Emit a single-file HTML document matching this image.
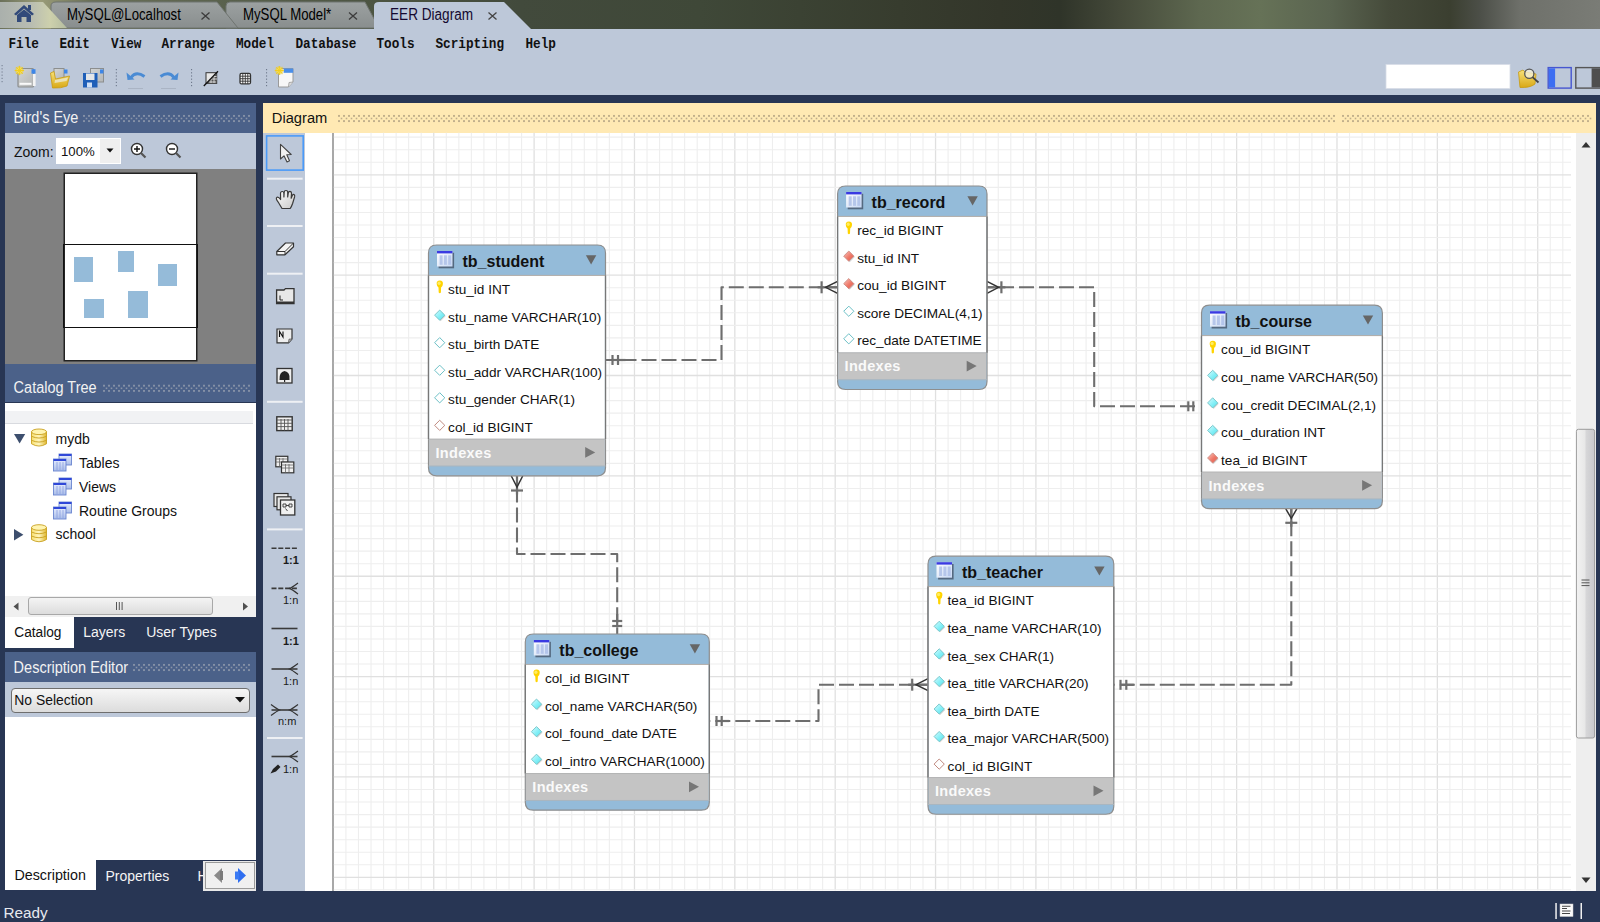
<!DOCTYPE html><html><head><meta charset="utf-8"><style>
html,body{margin:0;padding:0;}
body{width:1600px;height:922px;overflow:hidden;position:relative;background:#283654;font-family:'Liberation Sans', sans-serif;}
</style></head><body>
<div style="position:absolute;left:0;top:0;width:1600px;height:29px;background:linear-gradient(90deg,#6a705a 0px,#9a9c78 40px,#6a7058 90px,#58604c 240px,#4a5240 400px,#424a3c 520px,#3f4838 700px,#373c2e 900px,#33362a 1000px,#2f3429 1060px,#454a3a 1120px,#5e6850 1200px,#667257 1260px,#5a6450 1330px,#454a3a 1390px,#3b3f30 1450px,#4c4f48 1480px,#6e706a 1520px,#7a7c76 1600px);"></div>
<svg style="position:absolute;left:0;top:0" width="1600" height="30">
<defs>
<linearGradient id="tabg" x1="0" y1="0" x2="0" y2="1"><stop offset="0" stop-color="#9ca1a1"/><stop offset="1" stop-color="#898e8e"/></linearGradient>
<linearGradient id="homeg" x1="0" y1="0" x2="1" y2="0"><stop offset="0" stop-color="#aab0ac"/><stop offset="0.45" stop-color="#b8bcb2"/><stop offset="0.75" stop-color="#cdd0ac"/><stop offset="1" stop-color="#b4bca0"/></linearGradient>
</defs>
<path d="M226,28 L226,6 Q226,2 230,2 L365,2 L379,28 Z" fill="url(#tabg)" stroke="#6f7470" stroke-width="1"/>
<path d="M51,28 L51,6 Q51,2 56,2 L217,2 L238,28 Z" fill="url(#tabg)" stroke="#6f7470" stroke-width="1"/>
<path d="M0,28 L0,2 L43,2 L67,28 Z" fill="url(#homeg)"/>
<path d="M374,29 L374,6 Q374,2 379,2 L504,2 L531,29 Z" fill="#bdc8d9"/>
<g fill="#324a7a">
<path d="M14,14 L24,5 L34,14 L32,15.5 L24,8.5 L16,15.5 Z"/>
<path d="M17,15 L24,9.5 L31,15 L31,22 L26.5,22 L26.5,17 L21.5,17 L21.5,22 L17,22 Z"/>
<rect x="28" y="5" width="3" height="5"/>
</g>
<g stroke="#3c3c3c" stroke-width="1.3">
<path d="M201.5,12.5 L209.5,19.5 M209.5,12.5 L201.5,19.5"/>
<path d="M349,12.5 L357,19.5 M357,12.5 L349,19.5"/>
<path d="M488.5,12.5 L496.5,19.5 M496.5,12.5 L488.5,19.5" stroke="#444"/>
</g>
</svg>
<div style="position:absolute;left:67px;top:8.73px;white-space:pre;font:normal 13.2px/13.2px 'Liberation Sans', sans-serif;transform:scaleY(1.2);transform-origin:0 11.17px;color:#000;">MySQL@Localhost</div>
<div style="position:absolute;left:243px;top:8.73px;white-space:pre;font:normal 13.2px/13.2px 'Liberation Sans', sans-serif;transform:scaleY(1.2);transform-origin:0 11.17px;color:#000;">MySQL Model*</div>
<div style="position:absolute;left:390px;top:8.99px;white-space:pre;font:normal 13.6px/13.6px 'Liberation Sans', sans-serif;transform:scaleY(1.16);transform-origin:0 11.51px;color:#140830;">EER Diagram</div>
<div style="position:absolute;left:0px;top:29px;width:1600px;height:66px;background:#bdc8d9;"></div>
<div style="position:absolute;left:8.5px;top:37.599999999999994px;white-space:pre;font:bold 12.7px/14px 'Liberation Mono', monospace;color:#111;transform:scaleY(1.2);transform-origin:0 10.3px;">File</div>
<div style="position:absolute;left:59.5px;top:37.599999999999994px;white-space:pre;font:bold 12.7px/14px 'Liberation Mono', monospace;color:#111;transform:scaleY(1.2);transform-origin:0 10.3px;">Edit</div>
<div style="position:absolute;left:111px;top:37.599999999999994px;white-space:pre;font:bold 12.7px/14px 'Liberation Mono', monospace;color:#111;transform:scaleY(1.2);transform-origin:0 10.3px;">View</div>
<div style="position:absolute;left:161.5px;top:37.599999999999994px;white-space:pre;font:bold 12.7px/14px 'Liberation Mono', monospace;color:#111;transform:scaleY(1.2);transform-origin:0 10.3px;">Arrange</div>
<div style="position:absolute;left:236px;top:37.599999999999994px;white-space:pre;font:bold 12.7px/14px 'Liberation Mono', monospace;color:#111;transform:scaleY(1.2);transform-origin:0 10.3px;">Model</div>
<div style="position:absolute;left:295.5px;top:37.599999999999994px;white-space:pre;font:bold 12.7px/14px 'Liberation Mono', monospace;color:#111;transform:scaleY(1.2);transform-origin:0 10.3px;">Database</div>
<div style="position:absolute;left:376.5px;top:37.599999999999994px;white-space:pre;font:bold 12.7px/14px 'Liberation Mono', monospace;color:#111;transform:scaleY(1.2);transform-origin:0 10.3px;">Tools</div>
<div style="position:absolute;left:435.5px;top:37.599999999999994px;white-space:pre;font:bold 12.7px/14px 'Liberation Mono', monospace;color:#111;transform:scaleY(1.2);transform-origin:0 10.3px;">Scripting</div>
<div style="position:absolute;left:525.5px;top:37.599999999999994px;white-space:pre;font:bold 12.7px/14px 'Liberation Mono', monospace;color:#111;transform:scaleY(1.2);transform-origin:0 10.3px;">Help</div>
<div id="toolbar-icons"></div>
<div style="position:absolute;left:5px;top:103px;width:251px;height:29.599999999999994px;background:#4b6189;"></div>
<div style="position:absolute;left:13.6px;top:111.13px;white-space:pre;font:normal 14.5px/14.5px 'Liberation Sans', sans-serif;transform:scaleY(1.12);transform-origin:0 12.27px;color:#f2f2f2;">Bird's Eye</div>
<div style="position:absolute;left:5px;top:132.6px;width:251px;height:36.6px;background:#bdc8d9;"></div>
<div style="position:absolute;left:14px;top:145.15px;white-space:pre;font:normal 14px/14px 'Liberation Sans', sans-serif;color:#111;">Zoom:</div>
<div style="position:absolute;left:56px;top:138px;width:65px;height:26px;background:#fff;"></div>
<div style="position:absolute;left:100px;top:139px;width:20px;height:24px;background:#efefef;"></div>
<div style="position:absolute;left:61px;top:145.13px;white-space:pre;font:normal 13.2px/13.2px 'Liberation Sans', sans-serif;color:#111;">100%</div>
<div style="position:absolute;left:5px;top:169.2px;width:251px;height:195.2px;background:#808080;"></div>
<div style="position:absolute;left:64.7px;top:174.3px;width:131.5px;height:185.5px;background:#fff;box-shadow:0 0 0 1.5px #222;"></div>
<div style="position:absolute;left:63.2px;top:244.3px;width:135px;height:84px;border:1.5px solid #111;box-sizing:border-box;"></div>
<div style="position:absolute;left:73.8px;top:256.7px;width:19.10000000000001px;height:25.19999999999999px;background:#95bbd9;"></div>
<div style="position:absolute;left:117.9px;top:250.5px;width:16.0px;height:21.80000000000001px;background:#95bbd9;"></div>
<div style="position:absolute;left:157.7px;top:263.5px;width:19.5px;height:22.100000000000023px;background:#95bbd9;"></div>
<div style="position:absolute;left:84.2px;top:299.4px;width:19.799999999999997px;height:18.80000000000001px;background:#95bbd9;"></div>
<div style="position:absolute;left:128px;top:290.8px;width:20px;height:27.69999999999999px;background:#95bbd9;"></div>
<div style="position:absolute;left:5px;top:364.4px;width:251px;height:38.10000000000002px;background:#4b6189;"></div>
<div style="position:absolute;left:13.6px;top:381.03px;white-space:pre;font:normal 14.5px/14.5px 'Liberation Sans', sans-serif;transform:scaleY(1.12);transform-origin:0 12.27px;color:#f2f2f2;">Catalog Tree</div>
<div style="position:absolute;left:5px;top:402.5px;width:251px;height:214.2px;background:#fff;"></div>
<div style="position:absolute;left:5px;top:411.3px;width:248px;height:13px;background:#f1f2f4;border-bottom:1px solid #d8dadf;box-sizing:border-box;"></div>
<div style="position:absolute;left:55.5px;top:431.55px;white-space:pre;font:normal 14px/14px 'Liberation Sans', sans-serif;color:#111;">mydb</div>
<div style="position:absolute;left:79px;top:455.85px;white-space:pre;font:normal 14px/14px 'Liberation Sans', sans-serif;color:#111;">Tables</div>
<div style="position:absolute;left:79px;top:479.65px;white-space:pre;font:normal 14px/14px 'Liberation Sans', sans-serif;color:#111;">Views</div>
<div style="position:absolute;left:79px;top:503.65px;white-space:pre;font:normal 14px/14px 'Liberation Sans', sans-serif;color:#111;">Routine Groups</div>
<div style="position:absolute;left:55.5px;top:527.15px;white-space:pre;font:normal 14px/14px 'Liberation Sans', sans-serif;color:#111;">school</div>
<div style="position:absolute;left:5px;top:596.4px;width:251px;height:20.3px;background:#f0f0f0;"></div>
<div style="position:absolute;left:28.4px;top:597.2px;width:184.5px;height:18.3px;background:linear-gradient(#f4f4f4,#dcdcdc);border:1px solid #a8a8a8;border-radius:3px;box-sizing:border-box;"></div>
<div style="position:absolute;left:4.9px;top:617px;width:69.1px;height:30.6px;background:#fff;"></div>
<div style="position:absolute;left:14.3px;top:625.70px;white-space:pre;font:normal 13.7px/13.7px 'Liberation Sans', sans-serif;transform:scaleY(1.09);transform-origin:0 11.60px;color:#111;">Catalog</div>
<div style="position:absolute;left:83.2px;top:625.45px;white-space:pre;font:normal 14px/14px 'Liberation Sans', sans-serif;transform:scaleY(1.09);transform-origin:0 11.85px;color:#f4f4f4;">Layers</div>
<div style="position:absolute;left:146.2px;top:625.45px;white-space:pre;font:normal 14px/14px 'Liberation Sans', sans-serif;transform:scaleY(1.09);transform-origin:0 11.85px;color:#f4f4f4;">User Types</div>
<div style="position:absolute;left:5px;top:652.4px;width:251px;height:29.800000000000068px;background:#4b6189;"></div>
<div style="position:absolute;left:13.6px;top:660.73px;white-space:pre;font:normal 14.5px/14.5px 'Liberation Sans', sans-serif;transform:scaleY(1.12);transform-origin:0 12.27px;color:#f2f2f2;">Description Editor</div>
<div style="position:absolute;left:5px;top:682.2px;width:251px;height:35.2px;background:#bdc8d9;"></div>
<div style="position:absolute;left:10.6px;top:687.7px;width:239.6px;height:25.7px;background:linear-gradient(#f6f6f6,#dcdcdc);border:1.4px solid #6e6e6e;border-radius:4px;box-sizing:border-box;"></div>
<div style="position:absolute;left:14.3px;top:694.23px;white-space:pre;font:normal 13.9px/13.9px 'Liberation Sans', sans-serif;transform:scaleY(1.05);transform-origin:0 11.77px;color:#111;">No Selection</div>
<div style="position:absolute;left:5px;top:717.4px;width:251px;height:142.6px;background:#fff;"></div>
<div style="position:absolute;left:4.6px;top:860px;width:91.7px;height:30px;background:#fff;"></div>
<div style="position:absolute;left:14.4px;top:868.40px;white-space:pre;font:normal 14.3px/14.3px 'Liberation Sans', sans-serif;transform:scaleY(1.08);transform-origin:0 12.10px;color:#111;">Description</div>
<div style="position:absolute;left:105.5px;top:868.65px;white-space:pre;font:normal 14px/14px 'Liberation Sans', sans-serif;transform:scaleY(1.08);transform-origin:0 11.85px;color:#f4f4f4;">Properties</div>
<div style="position:absolute;left:197.5px;top:868.65px;white-space:pre;font:normal 14px/14px 'Liberation Sans', sans-serif;transform:scaleY(1.08);transform-origin:0 11.85px;color:#f4f4f4;">H</div>
<div style="position:absolute;left:203.3px;top:861px;width:52.7px;height:29.6px;background:#e9e9e9;"></div>
<div style="position:absolute;left:205px;top:862.3px;width:49.5px;height:26.3px;background:#f0f0f0;border:1px solid #9a9a9a;box-sizing:border-box;"></div>
<div style="position:absolute;left:3.5px;top:905.35px;white-space:pre;font:normal 15.3px/15.3px 'Liberation Sans', sans-serif;color:#e6e9ef;">Ready</div>
<div style="position:absolute;left:263px;top:103px;width:1333px;height:29.6px;background:#ffe9b3;"></div>
<div style="position:absolute;left:271.8px;top:110.56px;white-space:pre;font:normal 14.7px/14.7px 'Liberation Sans', sans-serif;color:#111;">Diagram</div>
<div style="position:absolute;left:263px;top:132.6px;width:42px;height:758px;background:#bdc8d9;"></div>
<div style="position:absolute;left:305px;top:132.6px;width:28px;height:758px;background:#fff;"></div>
<div style="position:absolute;left:331.6px;top:132.6px;width:2px;height:758px;background:#a8a8a8;"></div>
<div style="position:absolute;left:333.6px;top:132.6px;width:1242.4px;height:758px;background:#fff;"></div>
<div style="position:absolute;left:1576px;top:132.6px;width:20px;height:758px;background:#eeeeee;"></div>
<svg style="position:absolute;left:0;top:0" width="1600" height="922">
<clipPath id="cc"><rect x="333.6" y="132.6" width="1237.4" height="758.0"/></clipPath><g clip-path="url(#cc)">
<line x1="345.94" y1="132.6" x2="345.94" y2="890.6" stroke="#eeeeee" stroke-width="1.1"/>
<line x1="358.48" y1="132.6" x2="358.48" y2="890.6" stroke="#eeeeee" stroke-width="1.1"/>
<line x1="371.02" y1="132.6" x2="371.02" y2="890.6" stroke="#eeeeee" stroke-width="1.1"/>
<line x1="383.57" y1="132.6" x2="383.57" y2="890.6" stroke="#eeeeee" stroke-width="1.1"/>
<line x1="396.12" y1="132.6" x2="396.12" y2="890.6" stroke="#eeeeee" stroke-width="1.1"/>
<line x1="408.66" y1="132.6" x2="408.66" y2="890.6" stroke="#eeeeee" stroke-width="1.1"/>
<line x1="421.20" y1="132.6" x2="421.20" y2="890.6" stroke="#eeeeee" stroke-width="1.1"/>
<line x1="433.75" y1="132.6" x2="433.75" y2="890.6" stroke="#e0e0e0" stroke-width="1.3"/>
<line x1="446.30" y1="132.6" x2="446.30" y2="890.6" stroke="#eeeeee" stroke-width="1.1"/>
<line x1="458.84" y1="132.6" x2="458.84" y2="890.6" stroke="#eeeeee" stroke-width="1.1"/>
<line x1="471.38" y1="132.6" x2="471.38" y2="890.6" stroke="#eeeeee" stroke-width="1.1"/>
<line x1="483.93" y1="132.6" x2="483.93" y2="890.6" stroke="#eeeeee" stroke-width="1.1"/>
<line x1="496.48" y1="132.6" x2="496.48" y2="890.6" stroke="#eeeeee" stroke-width="1.1"/>
<line x1="509.02" y1="132.6" x2="509.02" y2="890.6" stroke="#eeeeee" stroke-width="1.1"/>
<line x1="521.57" y1="132.6" x2="521.57" y2="890.6" stroke="#eeeeee" stroke-width="1.1"/>
<line x1="534.11" y1="132.6" x2="534.11" y2="890.6" stroke="#e0e0e0" stroke-width="1.3"/>
<line x1="546.65" y1="132.6" x2="546.65" y2="890.6" stroke="#eeeeee" stroke-width="1.1"/>
<line x1="559.20" y1="132.6" x2="559.20" y2="890.6" stroke="#eeeeee" stroke-width="1.1"/>
<line x1="571.75" y1="132.6" x2="571.75" y2="890.6" stroke="#eeeeee" stroke-width="1.1"/>
<line x1="584.29" y1="132.6" x2="584.29" y2="890.6" stroke="#eeeeee" stroke-width="1.1"/>
<line x1="596.84" y1="132.6" x2="596.84" y2="890.6" stroke="#eeeeee" stroke-width="1.1"/>
<line x1="609.38" y1="132.6" x2="609.38" y2="890.6" stroke="#eeeeee" stroke-width="1.1"/>
<line x1="621.92" y1="132.6" x2="621.92" y2="890.6" stroke="#eeeeee" stroke-width="1.1"/>
<line x1="634.47" y1="132.6" x2="634.47" y2="890.6" stroke="#e0e0e0" stroke-width="1.3"/>
<line x1="647.01" y1="132.6" x2="647.01" y2="890.6" stroke="#eeeeee" stroke-width="1.1"/>
<line x1="659.56" y1="132.6" x2="659.56" y2="890.6" stroke="#eeeeee" stroke-width="1.1"/>
<line x1="672.11" y1="132.6" x2="672.11" y2="890.6" stroke="#eeeeee" stroke-width="1.1"/>
<line x1="684.65" y1="132.6" x2="684.65" y2="890.6" stroke="#eeeeee" stroke-width="1.1"/>
<line x1="697.19" y1="132.6" x2="697.19" y2="890.6" stroke="#eeeeee" stroke-width="1.1"/>
<line x1="709.74" y1="132.6" x2="709.74" y2="890.6" stroke="#eeeeee" stroke-width="1.1"/>
<line x1="722.29" y1="132.6" x2="722.29" y2="890.6" stroke="#eeeeee" stroke-width="1.1"/>
<line x1="734.83" y1="132.6" x2="734.83" y2="890.6" stroke="#e0e0e0" stroke-width="1.3"/>
<line x1="747.38" y1="132.6" x2="747.38" y2="890.6" stroke="#eeeeee" stroke-width="1.1"/>
<line x1="759.92" y1="132.6" x2="759.92" y2="890.6" stroke="#eeeeee" stroke-width="1.1"/>
<line x1="772.46" y1="132.6" x2="772.46" y2="890.6" stroke="#eeeeee" stroke-width="1.1"/>
<line x1="785.01" y1="132.6" x2="785.01" y2="890.6" stroke="#eeeeee" stroke-width="1.1"/>
<line x1="797.56" y1="132.6" x2="797.56" y2="890.6" stroke="#eeeeee" stroke-width="1.1"/>
<line x1="810.10" y1="132.6" x2="810.10" y2="890.6" stroke="#eeeeee" stroke-width="1.1"/>
<line x1="822.64" y1="132.6" x2="822.64" y2="890.6" stroke="#eeeeee" stroke-width="1.1"/>
<line x1="835.19" y1="132.6" x2="835.19" y2="890.6" stroke="#e0e0e0" stroke-width="1.3"/>
<line x1="847.74" y1="132.6" x2="847.74" y2="890.6" stroke="#eeeeee" stroke-width="1.1"/>
<line x1="860.28" y1="132.6" x2="860.28" y2="890.6" stroke="#eeeeee" stroke-width="1.1"/>
<line x1="872.83" y1="132.6" x2="872.83" y2="890.6" stroke="#eeeeee" stroke-width="1.1"/>
<line x1="885.37" y1="132.6" x2="885.37" y2="890.6" stroke="#eeeeee" stroke-width="1.1"/>
<line x1="897.91" y1="132.6" x2="897.91" y2="890.6" stroke="#eeeeee" stroke-width="1.1"/>
<line x1="910.46" y1="132.6" x2="910.46" y2="890.6" stroke="#eeeeee" stroke-width="1.1"/>
<line x1="923.00" y1="132.6" x2="923.00" y2="890.6" stroke="#eeeeee" stroke-width="1.1"/>
<line x1="935.55" y1="132.6" x2="935.55" y2="890.6" stroke="#e0e0e0" stroke-width="1.3"/>
<line x1="948.10" y1="132.6" x2="948.10" y2="890.6" stroke="#eeeeee" stroke-width="1.1"/>
<line x1="960.64" y1="132.6" x2="960.64" y2="890.6" stroke="#eeeeee" stroke-width="1.1"/>
<line x1="973.18" y1="132.6" x2="973.18" y2="890.6" stroke="#eeeeee" stroke-width="1.1"/>
<line x1="985.73" y1="132.6" x2="985.73" y2="890.6" stroke="#eeeeee" stroke-width="1.1"/>
<line x1="998.27" y1="132.6" x2="998.27" y2="890.6" stroke="#eeeeee" stroke-width="1.1"/>
<line x1="1010.82" y1="132.6" x2="1010.82" y2="890.6" stroke="#eeeeee" stroke-width="1.1"/>
<line x1="1023.37" y1="132.6" x2="1023.37" y2="890.6" stroke="#eeeeee" stroke-width="1.1"/>
<line x1="1035.91" y1="132.6" x2="1035.91" y2="890.6" stroke="#e0e0e0" stroke-width="1.3"/>
<line x1="1048.45" y1="132.6" x2="1048.45" y2="890.6" stroke="#eeeeee" stroke-width="1.1"/>
<line x1="1061.00" y1="132.6" x2="1061.00" y2="890.6" stroke="#eeeeee" stroke-width="1.1"/>
<line x1="1073.55" y1="132.6" x2="1073.55" y2="890.6" stroke="#eeeeee" stroke-width="1.1"/>
<line x1="1086.09" y1="132.6" x2="1086.09" y2="890.6" stroke="#eeeeee" stroke-width="1.1"/>
<line x1="1098.63" y1="132.6" x2="1098.63" y2="890.6" stroke="#eeeeee" stroke-width="1.1"/>
<line x1="1111.18" y1="132.6" x2="1111.18" y2="890.6" stroke="#eeeeee" stroke-width="1.1"/>
<line x1="1123.72" y1="132.6" x2="1123.72" y2="890.6" stroke="#eeeeee" stroke-width="1.1"/>
<line x1="1136.27" y1="132.6" x2="1136.27" y2="890.6" stroke="#e0e0e0" stroke-width="1.3"/>
<line x1="1148.82" y1="132.6" x2="1148.82" y2="890.6" stroke="#eeeeee" stroke-width="1.1"/>
<line x1="1161.36" y1="132.6" x2="1161.36" y2="890.6" stroke="#eeeeee" stroke-width="1.1"/>
<line x1="1173.90" y1="132.6" x2="1173.90" y2="890.6" stroke="#eeeeee" stroke-width="1.1"/>
<line x1="1186.45" y1="132.6" x2="1186.45" y2="890.6" stroke="#eeeeee" stroke-width="1.1"/>
<line x1="1198.99" y1="132.6" x2="1198.99" y2="890.6" stroke="#eeeeee" stroke-width="1.1"/>
<line x1="1211.54" y1="132.6" x2="1211.54" y2="890.6" stroke="#eeeeee" stroke-width="1.1"/>
<line x1="1224.09" y1="132.6" x2="1224.09" y2="890.6" stroke="#eeeeee" stroke-width="1.1"/>
<line x1="1236.63" y1="132.6" x2="1236.63" y2="890.6" stroke="#e0e0e0" stroke-width="1.3"/>
<line x1="1249.17" y1="132.6" x2="1249.17" y2="890.6" stroke="#eeeeee" stroke-width="1.1"/>
<line x1="1261.72" y1="132.6" x2="1261.72" y2="890.6" stroke="#eeeeee" stroke-width="1.1"/>
<line x1="1274.26" y1="132.6" x2="1274.26" y2="890.6" stroke="#eeeeee" stroke-width="1.1"/>
<line x1="1286.81" y1="132.6" x2="1286.81" y2="890.6" stroke="#eeeeee" stroke-width="1.1"/>
<line x1="1299.36" y1="132.6" x2="1299.36" y2="890.6" stroke="#eeeeee" stroke-width="1.1"/>
<line x1="1311.90" y1="132.6" x2="1311.90" y2="890.6" stroke="#eeeeee" stroke-width="1.1"/>
<line x1="1324.45" y1="132.6" x2="1324.45" y2="890.6" stroke="#eeeeee" stroke-width="1.1"/>
<line x1="1336.99" y1="132.6" x2="1336.99" y2="890.6" stroke="#e0e0e0" stroke-width="1.3"/>
<line x1="1349.53" y1="132.6" x2="1349.53" y2="890.6" stroke="#eeeeee" stroke-width="1.1"/>
<line x1="1362.08" y1="132.6" x2="1362.08" y2="890.6" stroke="#eeeeee" stroke-width="1.1"/>
<line x1="1374.62" y1="132.6" x2="1374.62" y2="890.6" stroke="#eeeeee" stroke-width="1.1"/>
<line x1="1387.17" y1="132.6" x2="1387.17" y2="890.6" stroke="#eeeeee" stroke-width="1.1"/>
<line x1="1399.72" y1="132.6" x2="1399.72" y2="890.6" stroke="#eeeeee" stroke-width="1.1"/>
<line x1="1412.26" y1="132.6" x2="1412.26" y2="890.6" stroke="#eeeeee" stroke-width="1.1"/>
<line x1="1424.80" y1="132.6" x2="1424.80" y2="890.6" stroke="#eeeeee" stroke-width="1.1"/>
<line x1="1437.35" y1="132.6" x2="1437.35" y2="890.6" stroke="#e0e0e0" stroke-width="1.3"/>
<line x1="1449.89" y1="132.6" x2="1449.89" y2="890.6" stroke="#eeeeee" stroke-width="1.1"/>
<line x1="1462.44" y1="132.6" x2="1462.44" y2="890.6" stroke="#eeeeee" stroke-width="1.1"/>
<line x1="1474.98" y1="132.6" x2="1474.98" y2="890.6" stroke="#eeeeee" stroke-width="1.1"/>
<line x1="1487.53" y1="132.6" x2="1487.53" y2="890.6" stroke="#eeeeee" stroke-width="1.1"/>
<line x1="1500.08" y1="132.6" x2="1500.08" y2="890.6" stroke="#eeeeee" stroke-width="1.1"/>
<line x1="1512.62" y1="132.6" x2="1512.62" y2="890.6" stroke="#eeeeee" stroke-width="1.1"/>
<line x1="1525.16" y1="132.6" x2="1525.16" y2="890.6" stroke="#eeeeee" stroke-width="1.1"/>
<line x1="1537.71" y1="132.6" x2="1537.71" y2="890.6" stroke="#e0e0e0" stroke-width="1.3"/>
<line x1="1550.25" y1="132.6" x2="1550.25" y2="890.6" stroke="#eeeeee" stroke-width="1.1"/>
<line x1="1562.80" y1="132.6" x2="1562.80" y2="890.6" stroke="#eeeeee" stroke-width="1.1"/>
<line x1="333.6" y1="137.17" x2="1571" y2="137.17" stroke="#eeeeee" stroke-width="1.1"/>
<line x1="333.6" y1="149.71" x2="1571" y2="149.71" stroke="#eeeeee" stroke-width="1.1"/>
<line x1="333.6" y1="162.26" x2="1571" y2="162.26" stroke="#eeeeee" stroke-width="1.1"/>
<line x1="333.6" y1="174.80" x2="1571" y2="174.80" stroke="#e0e0e0" stroke-width="1.3"/>
<line x1="333.6" y1="187.34" x2="1571" y2="187.34" stroke="#eeeeee" stroke-width="1.1"/>
<line x1="333.6" y1="199.89" x2="1571" y2="199.89" stroke="#eeeeee" stroke-width="1.1"/>
<line x1="333.6" y1="212.44" x2="1571" y2="212.44" stroke="#eeeeee" stroke-width="1.1"/>
<line x1="333.6" y1="224.98" x2="1571" y2="224.98" stroke="#eeeeee" stroke-width="1.1"/>
<line x1="333.6" y1="237.53" x2="1571" y2="237.53" stroke="#eeeeee" stroke-width="1.1"/>
<line x1="333.6" y1="250.07" x2="1571" y2="250.07" stroke="#eeeeee" stroke-width="1.1"/>
<line x1="333.6" y1="262.62" x2="1571" y2="262.62" stroke="#eeeeee" stroke-width="1.1"/>
<line x1="333.6" y1="275.16" x2="1571" y2="275.16" stroke="#e0e0e0" stroke-width="1.3"/>
<line x1="333.6" y1="287.71" x2="1571" y2="287.71" stroke="#eeeeee" stroke-width="1.1"/>
<line x1="333.6" y1="300.25" x2="1571" y2="300.25" stroke="#eeeeee" stroke-width="1.1"/>
<line x1="333.6" y1="312.80" x2="1571" y2="312.80" stroke="#eeeeee" stroke-width="1.1"/>
<line x1="333.6" y1="325.34" x2="1571" y2="325.34" stroke="#eeeeee" stroke-width="1.1"/>
<line x1="333.6" y1="337.88" x2="1571" y2="337.88" stroke="#eeeeee" stroke-width="1.1"/>
<line x1="333.6" y1="350.43" x2="1571" y2="350.43" stroke="#eeeeee" stroke-width="1.1"/>
<line x1="333.6" y1="362.98" x2="1571" y2="362.98" stroke="#eeeeee" stroke-width="1.1"/>
<line x1="333.6" y1="375.52" x2="1571" y2="375.52" stroke="#e0e0e0" stroke-width="1.3"/>
<line x1="333.6" y1="388.06" x2="1571" y2="388.06" stroke="#eeeeee" stroke-width="1.1"/>
<line x1="333.6" y1="400.61" x2="1571" y2="400.61" stroke="#eeeeee" stroke-width="1.1"/>
<line x1="333.6" y1="413.15" x2="1571" y2="413.15" stroke="#eeeeee" stroke-width="1.1"/>
<line x1="333.6" y1="425.70" x2="1571" y2="425.70" stroke="#eeeeee" stroke-width="1.1"/>
<line x1="333.6" y1="438.25" x2="1571" y2="438.25" stroke="#eeeeee" stroke-width="1.1"/>
<line x1="333.6" y1="450.79" x2="1571" y2="450.79" stroke="#eeeeee" stroke-width="1.1"/>
<line x1="333.6" y1="463.34" x2="1571" y2="463.34" stroke="#eeeeee" stroke-width="1.1"/>
<line x1="333.6" y1="475.88" x2="1571" y2="475.88" stroke="#e0e0e0" stroke-width="1.3"/>
<line x1="333.6" y1="488.43" x2="1571" y2="488.43" stroke="#eeeeee" stroke-width="1.1"/>
<line x1="333.6" y1="500.97" x2="1571" y2="500.97" stroke="#eeeeee" stroke-width="1.1"/>
<line x1="333.6" y1="513.51" x2="1571" y2="513.51" stroke="#eeeeee" stroke-width="1.1"/>
<line x1="333.6" y1="526.06" x2="1571" y2="526.06" stroke="#eeeeee" stroke-width="1.1"/>
<line x1="333.6" y1="538.61" x2="1571" y2="538.61" stroke="#eeeeee" stroke-width="1.1"/>
<line x1="333.6" y1="551.15" x2="1571" y2="551.15" stroke="#eeeeee" stroke-width="1.1"/>
<line x1="333.6" y1="563.69" x2="1571" y2="563.69" stroke="#eeeeee" stroke-width="1.1"/>
<line x1="333.6" y1="576.24" x2="1571" y2="576.24" stroke="#e0e0e0" stroke-width="1.3"/>
<line x1="333.6" y1="588.79" x2="1571" y2="588.79" stroke="#eeeeee" stroke-width="1.1"/>
<line x1="333.6" y1="601.33" x2="1571" y2="601.33" stroke="#eeeeee" stroke-width="1.1"/>
<line x1="333.6" y1="613.88" x2="1571" y2="613.88" stroke="#eeeeee" stroke-width="1.1"/>
<line x1="333.6" y1="626.42" x2="1571" y2="626.42" stroke="#eeeeee" stroke-width="1.1"/>
<line x1="333.6" y1="638.97" x2="1571" y2="638.97" stroke="#eeeeee" stroke-width="1.1"/>
<line x1="333.6" y1="651.51" x2="1571" y2="651.51" stroke="#eeeeee" stroke-width="1.1"/>
<line x1="333.6" y1="664.06" x2="1571" y2="664.06" stroke="#eeeeee" stroke-width="1.1"/>
<line x1="333.6" y1="676.60" x2="1571" y2="676.60" stroke="#e0e0e0" stroke-width="1.3"/>
<line x1="333.6" y1="689.14" x2="1571" y2="689.14" stroke="#eeeeee" stroke-width="1.1"/>
<line x1="333.6" y1="701.69" x2="1571" y2="701.69" stroke="#eeeeee" stroke-width="1.1"/>
<line x1="333.6" y1="714.23" x2="1571" y2="714.23" stroke="#eeeeee" stroke-width="1.1"/>
<line x1="333.6" y1="726.78" x2="1571" y2="726.78" stroke="#eeeeee" stroke-width="1.1"/>
<line x1="333.6" y1="739.33" x2="1571" y2="739.33" stroke="#eeeeee" stroke-width="1.1"/>
<line x1="333.6" y1="751.87" x2="1571" y2="751.87" stroke="#eeeeee" stroke-width="1.1"/>
<line x1="333.6" y1="764.41" x2="1571" y2="764.41" stroke="#eeeeee" stroke-width="1.1"/>
<line x1="333.6" y1="776.96" x2="1571" y2="776.96" stroke="#e0e0e0" stroke-width="1.3"/>
<line x1="333.6" y1="789.51" x2="1571" y2="789.51" stroke="#eeeeee" stroke-width="1.1"/>
<line x1="333.6" y1="802.05" x2="1571" y2="802.05" stroke="#eeeeee" stroke-width="1.1"/>
<line x1="333.6" y1="814.60" x2="1571" y2="814.60" stroke="#eeeeee" stroke-width="1.1"/>
<line x1="333.6" y1="827.14" x2="1571" y2="827.14" stroke="#eeeeee" stroke-width="1.1"/>
<line x1="333.6" y1="839.68" x2="1571" y2="839.68" stroke="#eeeeee" stroke-width="1.1"/>
<line x1="333.6" y1="852.23" x2="1571" y2="852.23" stroke="#eeeeee" stroke-width="1.1"/>
<line x1="333.6" y1="864.78" x2="1571" y2="864.78" stroke="#eeeeee" stroke-width="1.1"/>
<line x1="333.6" y1="877.32" x2="1571" y2="877.32" stroke="#e0e0e0" stroke-width="1.3"/>
<line x1="333.6" y1="889.87" x2="1571" y2="889.87" stroke="#eeeeee" stroke-width="1.1"/>
</g>
<path d="M605.5,360 L721.5,360 L721.5,287.3 L837.6,287.3" fill="none" stroke="#6e6e6e" stroke-width="2.1" stroke-linejoin="round" stroke-dasharray="15 5" stroke-dashoffset="4"/>
<path d="M612.5,360 L625.5,360" fill="none" stroke="#6e6e6e" stroke-width="2.2"/>
<path d="M612.5,365 L612.5,355" fill="none" stroke="#6e6e6e" stroke-width="2.2"/>
<path d="M618.0,365.0 L618.0,355.0" fill="none" stroke="#6e6e6e" stroke-width="2.2"/>
<path d="M837.6,287.3 L817.6,287.3" fill="none" stroke="#6e6e6e" stroke-width="2.2"/>
<path d="M837.6,281.3 L825.6,287.3 L837.6,293.3" fill="none" stroke="#333" stroke-width="1.5"/>
<path d="M821.6,281.3 L821.6,293.3" fill="none" stroke="#6e6e6e" stroke-width="2.2"/>
<path d="M987,287.3 L1094.2,287.3 L1094.2,406.3 L1195.5,406.3" fill="none" stroke="#6e6e6e" stroke-width="2.1" stroke-linejoin="round" stroke-dasharray="15 5" stroke-dashoffset="8"/>
<path d="M987,287.3 L1005.4,287.3" fill="none" stroke="#6e6e6e" stroke-width="2.2"/>
<path d="M987,293.3 L998.6,287.3 L987,281.3" fill="none" stroke="#333" stroke-width="1.5"/>
<path d="M1001.4,293.3 L1001.4,281.3" fill="none" stroke="#6e6e6e" stroke-width="2.2"/>
<path d="M1193.3,401.3 L1193.3,411.3" fill="none" stroke="#6e6e6e" stroke-width="2.2"/>
<path d="M1188.3,401.3 L1188.3,411.3" fill="none" stroke="#6e6e6e" stroke-width="2.2"/>
<path d="M517,476 L517,554 L617.2,554 L617.2,634" fill="none" stroke="#6e6e6e" stroke-width="2.1" stroke-linejoin="round" stroke-dasharray="15 5" stroke-dashoffset="8.5"/>
<path d="M517,476 L517.0,494.5" fill="none" stroke="#6e6e6e" stroke-width="2.2"/>
<path d="M511.3,476.0 L517,487 L522.7,476.0" fill="none" stroke="#333" stroke-width="1.5"/>
<path d="M511.0,490.5 L523.0,490.5" fill="none" stroke="#6e6e6e" stroke-width="2.2"/>
<path d="M617.2,626 L617.2,614" fill="none" stroke="#6e6e6e" stroke-width="2.2"/>
<path d="M622.2,626 L612.2,626" fill="none" stroke="#6e6e6e" stroke-width="2.2"/>
<path d="M622.2,621 L612.2,621" fill="none" stroke="#6e6e6e" stroke-width="2.2"/>
<path d="M709.3,721 L818.5,721 L818.5,684.7 L928,684.7" fill="none" stroke="#6e6e6e" stroke-width="2.1" stroke-linejoin="round" stroke-dasharray="15 5" stroke-dashoffset="14"/>
<path d="M716.5,721.0 L729.3,721" fill="none" stroke="#6e6e6e" stroke-width="2.2"/>
<path d="M716.5,726.0 L716.5,716.0" fill="none" stroke="#6e6e6e" stroke-width="2.2"/>
<path d="M721.6999999999999,726.0 L721.6999999999999,716.0" fill="none" stroke="#6e6e6e" stroke-width="2.2"/>
<path d="M928,684.7 L908.2,684.7" fill="none" stroke="#6e6e6e" stroke-width="2.2"/>
<path d="M928,678.7 L916,684.7 L928,690.7" fill="none" stroke="#333" stroke-width="1.5"/>
<path d="M912.2,678.7 L912.2,690.7" fill="none" stroke="#6e6e6e" stroke-width="2.2"/>
<path d="M1113.8,684.8 L1291.3,684.8 L1291.3,508.8" fill="none" stroke="#6e6e6e" stroke-width="2.1" stroke-linejoin="round" stroke-dasharray="15 5" stroke-dashoffset="14"/>
<path d="M1120.5,684.8 L1133.8,684.8" fill="none" stroke="#6e6e6e" stroke-width="2.2"/>
<path d="M1120.5,689.8 L1120.5,679.8" fill="none" stroke="#6e6e6e" stroke-width="2.2"/>
<path d="M1126.3,689.8 L1126.3,679.8" fill="none" stroke="#6e6e6e" stroke-width="2.2"/>
<path d="M1291.3,508.8 L1291.3,526.8" fill="none" stroke="#6e6e6e" stroke-width="2.2"/>
<path d="M1285.8,508.8 L1291.3,518.3 L1296.8,508.8" fill="none" stroke="#333" stroke-width="1.5"/>
<path d="M1285.3,522.8 L1297.3,522.8" fill="none" stroke="#6e6e6e" stroke-width="2.2"/>
</svg>
<svg style="position:absolute;left:0;top:0" width="1600" height="922">
<defs><linearGradient id="gcy" x1="0" y1="0" x2="1" y2="1"><stop offset="0" stop-color="#d8fcff"/><stop offset="0.6" stop-color="#7eeef6"/><stop offset="1" stop-color="#5ce0ea"/></linearGradient><linearGradient id="gti" x1="0" y1="0" x2="1" y2="1"><stop offset="0" stop-color="#ffffff"/><stop offset="1" stop-color="#c8d8f4"/></linearGradient><linearGradient id="grd" x1="0" y1="0" x2="1" y2="1"><stop offset="0" stop-color="#fcc8c0"/><stop offset="0.55" stop-color="#ee7868"/><stop offset="1" stop-color="#e05a4a"/></linearGradient></defs>
<path d="M428.5,253 Q428.5,245 436.5,245 L597.5,245 Q605.5,245 605.5,253 L605.5,467.78 Q605.5,475.78 597.5,475.78 L436.5,475.78 Q428.5,475.78 428.5,467.78 Z" fill="#94bbd9" stroke="#8e8e8e" stroke-width="1.2"/>
<rect x="429.1" y="275.4" width="175.8" height="163.68" fill="#fff"/>
<rect x="429.1" y="439.08" width="175.8" height="26.94999999999999" fill="#c4c4c4"/>
<line x1="428.5" y1="275.4" x2="605.5" y2="275.4" stroke="#b0aca6" stroke-width="1"/>
<line x1="428.5" y1="439.08" x2="605.5" y2="439.08" stroke="#b4b4b4" stroke-width="1"/>
<line x1="428.5" y1="466.03" x2="605.5" y2="466.03" stroke="#a9b6c0" stroke-width="1"/>
<path d="M428.5,275.4 L428.5,439.08 M605.5,275.4 L605.5,439.08" stroke="#777" stroke-width="1.3"/>
<path d="M585.9,255.3 L596.3,255.3 L591.1,264.4 Z" fill="#666"/>
<path d="M585.2,446.97999999999996 L595.2,452.38 L585.2,457.83 Z" fill="#777"/>
<rect x="438.6" y="252.8" width="15.5" height="15.5" fill="#4a5a70" opacity="0.85"/>
<rect x="437.0" y="251" width="15.5" height="15.5" fill="url(#gti)"/>
<rect x="437.0" y="251" width="15.5" height="2.4" fill="#3a3ae2"/>
<rect x="439.6" y="255.3" width="3" height="9.5" fill="#aebfe8" opacity="0.85"/>
<rect x="443.90000000000003" y="255.3" width="3" height="9.5" fill="#aebfe8" opacity="0.85"/>
<rect x="448.20000000000005" y="255.3" width="3" height="9.5" fill="#aebfe8" opacity="0.85"/>
<path d="M436.7,283.99999999999994 Q436.3,280.59999999999997 439.8,280.49999999999994 Q443.3,280.59999999999997 442.9,283.99999999999994 Q442.7,286.79999999999995 441.1,287.59999999999997 L440.9,292.59999999999997 Q439.8,293.99999999999994 438.7,292.59999999999997 L438.5,287.59999999999997 Q436.9,286.79999999999995 436.7,283.99999999999994 Z" fill="#ffd400"/>
<ellipse cx="439.1" cy="283.29999999999995" rx="1.6" ry="1.8" fill="#fff27a" opacity="0.8"/>
<path d="M440.59999999999997,310.94999999999993 L445.7,316.04999999999995 L440.59999999999997,321.15 L435.49999999999994,316.04999999999995 Z" fill="#d4d4d4"/>
<path d="M439.7,310.04999999999995 L444.8,315.15 L439.7,320.25 L434.59999999999997,315.15 Z" fill="url(#gcy)" stroke="#7cc8cc" stroke-width="1"/>
<path d="M439.7,337.59999999999997 L444.8,342.7 L439.7,347.8 L434.59999999999997,342.7 Z" fill="#ffffff" stroke="#6cc0c6" stroke-width="1"/>
<path d="M439.7,365.1499999999999 L444.8,370.24999999999994 L439.7,375.34999999999997 L434.59999999999997,370.24999999999994 Z" fill="#ffffff" stroke="#6cc0c6" stroke-width="1"/>
<path d="M439.7,392.69999999999993 L444.8,397.79999999999995 L439.7,402.9 L434.59999999999997,397.79999999999995 Z" fill="#ffffff" stroke="#6cc0c6" stroke-width="1"/>
<path d="M439.7,420.24999999999994 L444.8,425.34999999999997 L439.7,430.45 L434.59999999999997,425.34999999999997 Z" fill="#ffffff" stroke="#c08a80" stroke-width="1"/>
</svg>
<div style="position:absolute;left:462.5px;top:253.86px;white-space:pre;font:bold 16px/16px 'Liberation Sans', sans-serif;color:#111;">tb_student</div>
<div style="position:absolute;left:448.1px;top:283.29px;white-space:pre;font:normal 13.6px/13.6px 'Liberation Sans', sans-serif;color:#111;">stu_id INT</div>
<div style="position:absolute;left:448.1px;top:310.84px;white-space:pre;font:normal 13.6px/13.6px 'Liberation Sans', sans-serif;color:#111;">stu_name VARCHAR(10)</div>
<div style="position:absolute;left:448.1px;top:338.39px;white-space:pre;font:normal 13.6px/13.6px 'Liberation Sans', sans-serif;color:#111;">stu_birth DATE</div>
<div style="position:absolute;left:448.1px;top:365.94px;white-space:pre;font:normal 13.6px/13.6px 'Liberation Sans', sans-serif;color:#111;">stu_addr VARCHAR(100)</div>
<div style="position:absolute;left:448.1px;top:393.49px;white-space:pre;font:normal 13.6px/13.6px 'Liberation Sans', sans-serif;color:#111;">stu_gender CHAR(1)</div>
<div style="position:absolute;left:448.1px;top:421.04px;white-space:pre;font:normal 13.6px/13.6px 'Liberation Sans', sans-serif;color:#111;">col_id BIGINT</div>
<div style="position:absolute;left:435.5px;top:445.71px;white-space:pre;font:bold 14.5px/14.5px 'Liberation Sans', sans-serif;color:#fafafa;letter-spacing:0.3px;">Indexes</div>
<svg style="position:absolute;left:0;top:0" width="1600" height="922">
<defs><linearGradient id="gcy" x1="0" y1="0" x2="1" y2="1"><stop offset="0" stop-color="#d8fcff"/><stop offset="0.6" stop-color="#7eeef6"/><stop offset="1" stop-color="#5ce0ea"/></linearGradient><linearGradient id="gti" x1="0" y1="0" x2="1" y2="1"><stop offset="0" stop-color="#ffffff"/><stop offset="1" stop-color="#c8d8f4"/></linearGradient><linearGradient id="grd" x1="0" y1="0" x2="1" y2="1"><stop offset="0" stop-color="#fcc8c0"/><stop offset="0.55" stop-color="#ee7868"/><stop offset="1" stop-color="#e05a4a"/></linearGradient></defs>
<path d="M837.6,194 Q837.6,186 845.6,186 L979,186 Q987,186 987,194 L987,381.5 Q987,389.5 979,389.5 L845.6,389.5 Q837.6,389.5 837.6,381.5 Z" fill="#94bbd9" stroke="#8e8e8e" stroke-width="1.2"/>
<rect x="838.2" y="216.4" width="148.2" height="136.4" fill="#fff"/>
<rect x="838.2" y="352.8" width="148.2" height="26.94999999999999" fill="#c4c4c4"/>
<line x1="837.6" y1="216.4" x2="987" y2="216.4" stroke="#b0aca6" stroke-width="1"/>
<line x1="837.6" y1="352.8" x2="987" y2="352.8" stroke="#b4b4b4" stroke-width="1"/>
<line x1="837.6" y1="379.75" x2="987" y2="379.75" stroke="#a9b6c0" stroke-width="1"/>
<path d="M837.6,216.4 L837.6,352.8 M987,216.4 L987,352.8" stroke="#777" stroke-width="1.3"/>
<path d="M967.4,196.3 L977.8,196.3 L972.6,205.4 Z" fill="#666"/>
<path d="M966.7,360.7 L976.7,366.1 L966.7,371.55 Z" fill="#777"/>
<rect x="847.7" y="193.8" width="15.5" height="15.5" fill="#4a5a70" opacity="0.85"/>
<rect x="846.1" y="192" width="15.5" height="15.5" fill="url(#gti)"/>
<rect x="846.1" y="192" width="15.5" height="2.4" fill="#3a3ae2"/>
<rect x="848.7" y="196.3" width="3" height="9.5" fill="#aebfe8" opacity="0.85"/>
<rect x="853.0" y="196.3" width="3" height="9.5" fill="#aebfe8" opacity="0.85"/>
<rect x="857.3000000000001" y="196.3" width="3" height="9.5" fill="#aebfe8" opacity="0.85"/>
<path d="M845.8000000000001,225.0 Q845.4,221.60000000000002 848.9,221.5 Q852.4,221.60000000000002 852.0,225.0 Q851.8000000000001,227.8 850.2,228.60000000000002 L850.0,233.60000000000002 Q848.9,235.0 847.8000000000001,233.60000000000002 L847.6,228.60000000000002 Q846.0,227.8 845.8000000000001,225.0 Z" fill="#ffd400"/>
<ellipse cx="848.2" cy="224.3" rx="1.6" ry="1.8" fill="#fff27a" opacity="0.8"/>
<path d="M849.7,251.95000000000005 L854.8000000000001,257.05 L849.7,262.15000000000003 L844.6,257.05 Z" fill="#d4d4d4"/>
<path d="M848.8000000000001,251.05000000000004 L853.9000000000001,256.15000000000003 L848.8000000000001,261.25000000000006 L843.7,256.15000000000003 Z" fill="url(#grd)" stroke="#d09088" stroke-width="1"/>
<path d="M849.7,279.5 L854.8000000000001,284.6 L849.7,289.70000000000005 L844.6,284.6 Z" fill="#d4d4d4"/>
<path d="M848.8000000000001,278.6 L853.9000000000001,283.70000000000005 L848.8000000000001,288.80000000000007 L843.7,283.70000000000005 Z" fill="url(#grd)" stroke="#d09088" stroke-width="1"/>
<path d="M848.8000000000001,306.15000000000003 L853.9000000000001,311.25000000000006 L848.8000000000001,316.3500000000001 L843.7,311.25000000000006 Z" fill="#ffffff" stroke="#6cc0c6" stroke-width="1"/>
<path d="M848.8000000000001,333.7 L853.9000000000001,338.8 L848.8000000000001,343.90000000000003 L843.7,338.8 Z" fill="#ffffff" stroke="#6cc0c6" stroke-width="1"/>
</svg>
<div style="position:absolute;left:871.6px;top:194.86px;white-space:pre;font:bold 16px/16px 'Liberation Sans', sans-serif;color:#111;">tb_record</div>
<div style="position:absolute;left:857.2px;top:224.29px;white-space:pre;font:normal 13.6px/13.6px 'Liberation Sans', sans-serif;color:#111;">rec_id BIGINT</div>
<div style="position:absolute;left:857.2px;top:251.84px;white-space:pre;font:normal 13.6px/13.6px 'Liberation Sans', sans-serif;color:#111;">stu_id INT</div>
<div style="position:absolute;left:857.2px;top:279.39px;white-space:pre;font:normal 13.6px/13.6px 'Liberation Sans', sans-serif;color:#111;">cou_id BIGINT</div>
<div style="position:absolute;left:857.2px;top:306.94px;white-space:pre;font:normal 13.6px/13.6px 'Liberation Sans', sans-serif;color:#111;">score DECIMAL(4,1)</div>
<div style="position:absolute;left:857.2px;top:334.49px;white-space:pre;font:normal 13.6px/13.6px 'Liberation Sans', sans-serif;color:#111;">rec_date DATETIME</div>
<div style="position:absolute;left:844.6px;top:359.43px;white-space:pre;font:bold 14.5px/14.5px 'Liberation Sans', sans-serif;color:#fafafa;letter-spacing:0.3px;">Indexes</div>
<svg style="position:absolute;left:0;top:0" width="1600" height="922">
<defs><linearGradient id="gcy" x1="0" y1="0" x2="1" y2="1"><stop offset="0" stop-color="#d8fcff"/><stop offset="0.6" stop-color="#7eeef6"/><stop offset="1" stop-color="#5ce0ea"/></linearGradient><linearGradient id="gti" x1="0" y1="0" x2="1" y2="1"><stop offset="0" stop-color="#ffffff"/><stop offset="1" stop-color="#c8d8f4"/></linearGradient><linearGradient id="grd" x1="0" y1="0" x2="1" y2="1"><stop offset="0" stop-color="#fcc8c0"/><stop offset="0.55" stop-color="#ee7868"/><stop offset="1" stop-color="#e05a4a"/></linearGradient></defs>
<path d="M1201.5,313.2 Q1201.5,305.2 1209.5,305.2 L1374.4,305.2 Q1382.4,305.2 1382.4,313.2 L1382.4,500.7 Q1382.4,508.7 1374.4,508.7 L1209.5,508.7 Q1201.5,508.7 1201.5,500.7 Z" fill="#94bbd9" stroke="#8e8e8e" stroke-width="1.2"/>
<rect x="1202.1" y="335.59999999999997" width="179.7000000000001" height="136.40000000000003" fill="#fff"/>
<rect x="1202.1" y="472.0" width="179.7000000000001" height="26.94999999999999" fill="#c4c4c4"/>
<line x1="1201.5" y1="335.59999999999997" x2="1382.4" y2="335.59999999999997" stroke="#b0aca6" stroke-width="1"/>
<line x1="1201.5" y1="472.0" x2="1382.4" y2="472.0" stroke="#b4b4b4" stroke-width="1"/>
<line x1="1201.5" y1="498.95" x2="1382.4" y2="498.95" stroke="#a9b6c0" stroke-width="1"/>
<path d="M1201.5,335.59999999999997 L1201.5,472.0 M1382.4,335.59999999999997 L1382.4,472.0" stroke="#777" stroke-width="1.3"/>
<path d="M1362.8000000000002,315.5 L1373.2,315.5 L1368.0,324.59999999999997 Z" fill="#666"/>
<path d="M1362.1000000000001,479.9 L1372.1000000000001,485.3 L1362.1000000000001,490.75 Z" fill="#777"/>
<rect x="1211.6" y="313.0" width="15.5" height="15.5" fill="#4a5a70" opacity="0.85"/>
<rect x="1210.0" y="311.2" width="15.5" height="15.5" fill="url(#gti)"/>
<rect x="1210.0" y="311.2" width="15.5" height="2.4" fill="#3a3ae2"/>
<rect x="1212.6" y="315.5" width="3" height="9.5" fill="#aebfe8" opacity="0.85"/>
<rect x="1216.8999999999999" y="315.5" width="3" height="9.5" fill="#aebfe8" opacity="0.85"/>
<rect x="1221.1999999999998" y="315.5" width="3" height="9.5" fill="#aebfe8" opacity="0.85"/>
<path d="M1209.7,344.19999999999993 Q1209.3,340.79999999999995 1212.8,340.69999999999993 Q1216.3,340.79999999999995 1215.9,344.19999999999993 Q1215.7,346.99999999999994 1214.1,347.79999999999995 L1213.9,352.79999999999995 Q1212.8,354.19999999999993 1211.7,352.79999999999995 L1211.5,347.79999999999995 Q1209.9,346.99999999999994 1209.7,344.19999999999993 Z" fill="#ffd400"/>
<ellipse cx="1212.1" cy="343.49999999999994" rx="1.6" ry="1.8" fill="#fff27a" opacity="0.8"/>
<path d="M1213.6000000000001,371.1499999999999 L1218.7,376.24999999999994 L1213.6000000000001,381.34999999999997 L1208.5000000000002,376.24999999999994 Z" fill="#d4d4d4"/>
<path d="M1212.7,370.24999999999994 L1217.8,375.34999999999997 L1212.7,380.45 L1207.6000000000001,375.34999999999997 Z" fill="url(#gcy)" stroke="#7cc8cc" stroke-width="1"/>
<path d="M1213.6000000000001,398.69999999999993 L1218.7,403.79999999999995 L1213.6000000000001,408.9 L1208.5000000000002,403.79999999999995 Z" fill="#d4d4d4"/>
<path d="M1212.7,397.79999999999995 L1217.8,402.9 L1212.7,408.0 L1207.6000000000001,402.9 Z" fill="url(#gcy)" stroke="#7cc8cc" stroke-width="1"/>
<path d="M1213.6000000000001,426.24999999999994 L1218.7,431.34999999999997 L1213.6000000000001,436.45 L1208.5000000000002,431.34999999999997 Z" fill="#d4d4d4"/>
<path d="M1212.7,425.34999999999997 L1217.8,430.45 L1212.7,435.55 L1207.6000000000001,430.45 Z" fill="url(#gcy)" stroke="#7cc8cc" stroke-width="1"/>
<path d="M1213.6000000000001,453.7999999999999 L1218.7,458.8999999999999 L1213.6000000000001,463.99999999999994 L1208.5000000000002,458.8999999999999 Z" fill="#d4d4d4"/>
<path d="M1212.7,452.8999999999999 L1217.8,457.99999999999994 L1212.7,463.09999999999997 L1207.6000000000001,457.99999999999994 Z" fill="url(#grd)" stroke="#d09088" stroke-width="1"/>
</svg>
<div style="position:absolute;left:1235.5px;top:314.06px;white-space:pre;font:bold 16px/16px 'Liberation Sans', sans-serif;color:#111;">tb_course</div>
<div style="position:absolute;left:1221.1px;top:343.49px;white-space:pre;font:normal 13.6px/13.6px 'Liberation Sans', sans-serif;color:#111;">cou_id BIGINT</div>
<div style="position:absolute;left:1221.1px;top:371.04px;white-space:pre;font:normal 13.6px/13.6px 'Liberation Sans', sans-serif;color:#111;">cou_name VARCHAR(50)</div>
<div style="position:absolute;left:1221.1px;top:398.59px;white-space:pre;font:normal 13.6px/13.6px 'Liberation Sans', sans-serif;color:#111;">cou_credit DECIMAL(2,1)</div>
<div style="position:absolute;left:1221.1px;top:426.14px;white-space:pre;font:normal 13.6px/13.6px 'Liberation Sans', sans-serif;color:#111;">cou_duration INT</div>
<div style="position:absolute;left:1221.1px;top:453.69px;white-space:pre;font:normal 13.6px/13.6px 'Liberation Sans', sans-serif;color:#111;">tea_id BIGINT</div>
<div style="position:absolute;left:1208.5px;top:478.63px;white-space:pre;font:bold 14.5px/14.5px 'Liberation Sans', sans-serif;color:#fafafa;letter-spacing:0.3px;">Indexes</div>
<svg style="position:absolute;left:0;top:0" width="1600" height="922">
<defs><linearGradient id="gcy" x1="0" y1="0" x2="1" y2="1"><stop offset="0" stop-color="#d8fcff"/><stop offset="0.6" stop-color="#7eeef6"/><stop offset="1" stop-color="#5ce0ea"/></linearGradient><linearGradient id="gti" x1="0" y1="0" x2="1" y2="1"><stop offset="0" stop-color="#ffffff"/><stop offset="1" stop-color="#c8d8f4"/></linearGradient><linearGradient id="grd" x1="0" y1="0" x2="1" y2="1"><stop offset="0" stop-color="#fcc8c0"/><stop offset="0.55" stop-color="#ee7868"/><stop offset="1" stop-color="#e05a4a"/></linearGradient></defs>
<path d="M525.3,642 Q525.3,634 533.3,634 L701.3,634 Q709.3,634 709.3,642 L709.3,802.22 Q709.3,810.22 701.3,810.22 L533.3,810.22 Q525.3,810.22 525.3,802.22 Z" fill="#94bbd9" stroke="#8e8e8e" stroke-width="1.2"/>
<rect x="525.9" y="664.4" width="182.8" height="109.12" fill="#fff"/>
<rect x="525.9" y="773.52" width="182.8" height="26.950000000000045" fill="#c4c4c4"/>
<line x1="525.3" y1="664.4" x2="709.3" y2="664.4" stroke="#b0aca6" stroke-width="1"/>
<line x1="525.3" y1="773.52" x2="709.3" y2="773.52" stroke="#b4b4b4" stroke-width="1"/>
<line x1="525.3" y1="800.47" x2="709.3" y2="800.47" stroke="#a9b6c0" stroke-width="1"/>
<path d="M525.3,664.4 L525.3,773.52 M709.3,664.4 L709.3,773.52" stroke="#777" stroke-width="1.3"/>
<path d="M689.6999999999999,644.3 L700.0999999999999,644.3 L694.9,653.4 Z" fill="#666"/>
<path d="M689.0,781.42 L699.0,786.8199999999999 L689.0,792.27 Z" fill="#777"/>
<rect x="535.4" y="641.8" width="15.5" height="15.5" fill="#4a5a70" opacity="0.85"/>
<rect x="533.8" y="640" width="15.5" height="15.5" fill="url(#gti)"/>
<rect x="533.8" y="640" width="15.5" height="2.4" fill="#3a3ae2"/>
<rect x="536.4" y="644.3" width="3" height="9.5" fill="#aebfe8" opacity="0.85"/>
<rect x="540.6999999999999" y="644.3" width="3" height="9.5" fill="#aebfe8" opacity="0.85"/>
<rect x="545.0" y="644.3" width="3" height="9.5" fill="#aebfe8" opacity="0.85"/>
<path d="M533.5,673.0 Q533.0999999999999,669.5999999999999 536.5999999999999,669.5 Q540.0999999999999,669.5999999999999 539.6999999999999,673.0 Q539.5,675.8 537.9,676.5999999999999 L537.6999999999999,681.5999999999999 Q536.5999999999999,683.0 535.5,681.5999999999999 L535.3,676.5999999999999 Q533.6999999999999,675.8 533.5,673.0 Z" fill="#ffd400"/>
<ellipse cx="535.9" cy="672.3" rx="1.6" ry="1.8" fill="#fff27a" opacity="0.8"/>
<path d="M537.4,699.9499999999998 L542.5,705.0499999999998 L537.4,710.1499999999999 L532.3,705.0499999999998 Z" fill="#d4d4d4"/>
<path d="M536.5,699.0499999999998 L541.6,704.1499999999999 L536.5,709.2499999999999 L531.4,704.1499999999999 Z" fill="url(#gcy)" stroke="#7cc8cc" stroke-width="1"/>
<path d="M537.4,727.4999999999999 L542.5,732.5999999999999 L537.4,737.6999999999999 L532.3,732.5999999999999 Z" fill="#d4d4d4"/>
<path d="M536.5,726.5999999999999 L541.6,731.6999999999999 L536.5,736.8 L531.4,731.6999999999999 Z" fill="url(#gcy)" stroke="#7cc8cc" stroke-width="1"/>
<path d="M537.4,755.0499999999998 L542.5,760.1499999999999 L537.4,765.2499999999999 L532.3,760.1499999999999 Z" fill="#d4d4d4"/>
<path d="M536.5,754.1499999999999 L541.6,759.2499999999999 L536.5,764.3499999999999 L531.4,759.2499999999999 Z" fill="url(#gcy)" stroke="#7cc8cc" stroke-width="1"/>
</svg>
<div style="position:absolute;left:559.3px;top:642.86px;white-space:pre;font:bold 16px/16px 'Liberation Sans', sans-serif;color:#111;">tb_college</div>
<div style="position:absolute;left:544.9px;top:672.29px;white-space:pre;font:normal 13.6px/13.6px 'Liberation Sans', sans-serif;color:#111;">col_id BIGINT</div>
<div style="position:absolute;left:544.9px;top:699.84px;white-space:pre;font:normal 13.6px/13.6px 'Liberation Sans', sans-serif;color:#111;">col_name VARCHAR(50)</div>
<div style="position:absolute;left:544.9px;top:727.39px;white-space:pre;font:normal 13.6px/13.6px 'Liberation Sans', sans-serif;color:#111;">col_found_date DATE</div>
<div style="position:absolute;left:544.9px;top:754.94px;white-space:pre;font:normal 13.6px/13.6px 'Liberation Sans', sans-serif;color:#111;">col_intro VARCHAR(1000)</div>
<div style="position:absolute;left:532.3px;top:780.15px;white-space:pre;font:bold 14.5px/14.5px 'Liberation Sans', sans-serif;color:#fafafa;letter-spacing:0.3px;">Indexes</div>
<svg style="position:absolute;left:0;top:0" width="1600" height="922">
<defs><linearGradient id="gcy" x1="0" y1="0" x2="1" y2="1"><stop offset="0" stop-color="#d8fcff"/><stop offset="0.6" stop-color="#7eeef6"/><stop offset="1" stop-color="#5ce0ea"/></linearGradient><linearGradient id="gti" x1="0" y1="0" x2="1" y2="1"><stop offset="0" stop-color="#ffffff"/><stop offset="1" stop-color="#c8d8f4"/></linearGradient><linearGradient id="grd" x1="0" y1="0" x2="1" y2="1"><stop offset="0" stop-color="#fcc8c0"/><stop offset="0.55" stop-color="#ee7868"/><stop offset="1" stop-color="#e05a4a"/></linearGradient></defs>
<path d="M928,564.2 Q928,556.2 936,556.2 L1105.8,556.2 Q1113.8,556.2 1113.8,564.2 L1113.8,806.2600000000001 Q1113.8,814.2600000000001 1105.8,814.2600000000001 L936,814.2600000000001 Q928,814.2600000000001 928,806.2600000000001 Z" fill="#94bbd9" stroke="#8e8e8e" stroke-width="1.2"/>
<rect x="928.6" y="586.6" width="184.59999999999997" height="190.96000000000004" fill="#fff"/>
<rect x="928.6" y="777.5600000000001" width="184.59999999999997" height="26.950000000000045" fill="#c4c4c4"/>
<line x1="928" y1="586.6" x2="1113.8" y2="586.6" stroke="#b0aca6" stroke-width="1"/>
<line x1="928" y1="777.5600000000001" x2="1113.8" y2="777.5600000000001" stroke="#b4b4b4" stroke-width="1"/>
<line x1="928" y1="804.5100000000001" x2="1113.8" y2="804.5100000000001" stroke="#a9b6c0" stroke-width="1"/>
<path d="M928,586.6 L928,777.5600000000001 M1113.8,586.6 L1113.8,777.5600000000001" stroke="#777" stroke-width="1.3"/>
<path d="M1094.2,566.5 L1104.6,566.5 L1099.3999999999999,575.6 Z" fill="#666"/>
<path d="M1093.5,785.46 L1103.5,790.86 L1093.5,796.3100000000001 Z" fill="#777"/>
<rect x="938.1" y="564.0" width="15.5" height="15.5" fill="#4a5a70" opacity="0.85"/>
<rect x="936.5" y="562.2" width="15.5" height="15.5" fill="url(#gti)"/>
<rect x="936.5" y="562.2" width="15.5" height="2.4" fill="#3a3ae2"/>
<rect x="939.1" y="566.5" width="3" height="9.5" fill="#aebfe8" opacity="0.85"/>
<rect x="943.4" y="566.5" width="3" height="9.5" fill="#aebfe8" opacity="0.85"/>
<rect x="947.7" y="566.5" width="3" height="9.5" fill="#aebfe8" opacity="0.85"/>
<path d="M936.2,595.2 Q935.8,591.8 939.3,591.7 Q942.8,591.8 942.4,595.2 Q942.2,598.0 940.6,598.8 L940.4,603.8 Q939.3,605.2 938.2,603.8 L938,598.8 Q936.4,598.0 936.2,595.2 Z" fill="#ffd400"/>
<ellipse cx="938.6" cy="594.5" rx="1.6" ry="1.8" fill="#fff27a" opacity="0.8"/>
<path d="M940.1,622.1499999999999 L945.2,627.2499999999999 L940.1,632.3499999999999 L935.0,627.2499999999999 Z" fill="#d4d4d4"/>
<path d="M939.2,621.2499999999999 L944.3000000000001,626.3499999999999 L939.2,631.4499999999999 L934.1,626.3499999999999 Z" fill="url(#gcy)" stroke="#7cc8cc" stroke-width="1"/>
<path d="M940.1,649.6999999999999 L945.2,654.8 L940.1,659.9 L935.0,654.8 Z" fill="#d4d4d4"/>
<path d="M939.2,648.8 L944.3000000000001,653.9 L939.2,659.0 L934.1,653.9 Z" fill="url(#gcy)" stroke="#7cc8cc" stroke-width="1"/>
<path d="M940.1,677.2499999999999 L945.2,682.3499999999999 L940.1,687.4499999999999 L935.0,682.3499999999999 Z" fill="#d4d4d4"/>
<path d="M939.2,676.3499999999999 L944.3000000000001,681.4499999999999 L939.2,686.55 L934.1,681.4499999999999 Z" fill="url(#gcy)" stroke="#7cc8cc" stroke-width="1"/>
<path d="M940.1,704.8 L945.2,709.9 L940.1,715.0 L935.0,709.9 Z" fill="#d4d4d4"/>
<path d="M939.2,703.9 L944.3000000000001,709.0 L939.2,714.1 L934.1,709.0 Z" fill="url(#gcy)" stroke="#7cc8cc" stroke-width="1"/>
<path d="M940.1,732.3499999999999 L945.2,737.4499999999999 L940.1,742.55 L935.0,737.4499999999999 Z" fill="#d4d4d4"/>
<path d="M939.2,731.4499999999999 L944.3000000000001,736.55 L939.2,741.65 L934.1,736.55 Z" fill="url(#gcy)" stroke="#7cc8cc" stroke-width="1"/>
<path d="M939.2,758.9999999999999 L944.3000000000001,764.0999999999999 L939.2,769.1999999999999 L934.1,764.0999999999999 Z" fill="#ffffff" stroke="#c08a80" stroke-width="1"/>
</svg>
<div style="position:absolute;left:962px;top:565.06px;white-space:pre;font:bold 16px/16px 'Liberation Sans', sans-serif;color:#111;">tb_teacher</div>
<div style="position:absolute;left:947.6px;top:594.49px;white-space:pre;font:normal 13.6px/13.6px 'Liberation Sans', sans-serif;color:#111;">tea_id BIGINT</div>
<div style="position:absolute;left:947.6px;top:622.04px;white-space:pre;font:normal 13.6px/13.6px 'Liberation Sans', sans-serif;color:#111;">tea_name VARCHAR(10)</div>
<div style="position:absolute;left:947.6px;top:649.59px;white-space:pre;font:normal 13.6px/13.6px 'Liberation Sans', sans-serif;color:#111;">tea_sex CHAR(1)</div>
<div style="position:absolute;left:947.6px;top:677.14px;white-space:pre;font:normal 13.6px/13.6px 'Liberation Sans', sans-serif;color:#111;">tea_title VARCHAR(20)</div>
<div style="position:absolute;left:947.6px;top:704.69px;white-space:pre;font:normal 13.6px/13.6px 'Liberation Sans', sans-serif;color:#111;">tea_birth DATE</div>
<div style="position:absolute;left:947.6px;top:732.24px;white-space:pre;font:normal 13.6px/13.6px 'Liberation Sans', sans-serif;color:#111;">tea_major VARCHAR(500)</div>
<div style="position:absolute;left:947.6px;top:759.79px;white-space:pre;font:normal 13.6px/13.6px 'Liberation Sans', sans-serif;color:#111;">col_id BIGINT</div>
<div style="position:absolute;left:935px;top:784.19px;white-space:pre;font:bold 14.5px/14.5px 'Liberation Sans', sans-serif;color:#fafafa;letter-spacing:0.3px;">Indexes</div>
<svg style="position:absolute;left:0;top:0" width="1600" height="922"><rect x="83.05" y="114.95" width="1.9" height="1.9" fill="#8893a8"/><rect x="83.05" y="120.15" width="1.9" height="1.9" fill="#8893a8"/><rect x="85.70" y="117.70" width="1.6" height="1.6" fill="#8893a8"/><rect x="88.05" y="114.95" width="1.9" height="1.9" fill="#8893a8"/><rect x="88.05" y="120.15" width="1.9" height="1.9" fill="#8893a8"/><rect x="90.70" y="117.70" width="1.6" height="1.6" fill="#8893a8"/><rect x="93.05" y="114.95" width="1.9" height="1.9" fill="#8893a8"/><rect x="93.05" y="120.15" width="1.9" height="1.9" fill="#8893a8"/><rect x="95.70" y="117.70" width="1.6" height="1.6" fill="#8893a8"/><rect x="98.05" y="114.95" width="1.9" height="1.9" fill="#8893a8"/><rect x="98.05" y="120.15" width="1.9" height="1.9" fill="#8893a8"/><rect x="100.70" y="117.70" width="1.6" height="1.6" fill="#8893a8"/><rect x="103.05" y="114.95" width="1.9" height="1.9" fill="#8893a8"/><rect x="103.05" y="120.15" width="1.9" height="1.9" fill="#8893a8"/><rect x="105.70" y="117.70" width="1.6" height="1.6" fill="#8893a8"/><rect x="108.05" y="114.95" width="1.9" height="1.9" fill="#8893a8"/><rect x="108.05" y="120.15" width="1.9" height="1.9" fill="#8893a8"/><rect x="110.70" y="117.70" width="1.6" height="1.6" fill="#8893a8"/><rect x="113.05" y="114.95" width="1.9" height="1.9" fill="#8893a8"/><rect x="113.05" y="120.15" width="1.9" height="1.9" fill="#8893a8"/><rect x="115.70" y="117.70" width="1.6" height="1.6" fill="#8893a8"/><rect x="118.05" y="114.95" width="1.9" height="1.9" fill="#8893a8"/><rect x="118.05" y="120.15" width="1.9" height="1.9" fill="#8893a8"/><rect x="120.70" y="117.70" width="1.6" height="1.6" fill="#8893a8"/><rect x="123.05" y="114.95" width="1.9" height="1.9" fill="#8893a8"/><rect x="123.05" y="120.15" width="1.9" height="1.9" fill="#8893a8"/><rect x="125.70" y="117.70" width="1.6" height="1.6" fill="#8893a8"/><rect x="128.05" y="114.95" width="1.9" height="1.9" fill="#8893a8"/><rect x="128.05" y="120.15" width="1.9" height="1.9" fill="#8893a8"/><rect x="130.70" y="117.70" width="1.6" height="1.6" fill="#8893a8"/><rect x="133.05" y="114.95" width="1.9" height="1.9" fill="#8893a8"/><rect x="133.05" y="120.15" width="1.9" height="1.9" fill="#8893a8"/><rect x="135.70" y="117.70" width="1.6" height="1.6" fill="#8893a8"/><rect x="138.05" y="114.95" width="1.9" height="1.9" fill="#8893a8"/><rect x="138.05" y="120.15" width="1.9" height="1.9" fill="#8893a8"/><rect x="140.70" y="117.70" width="1.6" height="1.6" fill="#8893a8"/><rect x="143.05" y="114.95" width="1.9" height="1.9" fill="#8893a8"/><rect x="143.05" y="120.15" width="1.9" height="1.9" fill="#8893a8"/><rect x="145.70" y="117.70" width="1.6" height="1.6" fill="#8893a8"/><rect x="148.05" y="114.95" width="1.9" height="1.9" fill="#8893a8"/><rect x="148.05" y="120.15" width="1.9" height="1.9" fill="#8893a8"/><rect x="150.70" y="117.70" width="1.6" height="1.6" fill="#8893a8"/><rect x="153.05" y="114.95" width="1.9" height="1.9" fill="#8893a8"/><rect x="153.05" y="120.15" width="1.9" height="1.9" fill="#8893a8"/><rect x="155.70" y="117.70" width="1.6" height="1.6" fill="#8893a8"/><rect x="158.05" y="114.95" width="1.9" height="1.9" fill="#8893a8"/><rect x="158.05" y="120.15" width="1.9" height="1.9" fill="#8893a8"/><rect x="160.70" y="117.70" width="1.6" height="1.6" fill="#8893a8"/><rect x="163.05" y="114.95" width="1.9" height="1.9" fill="#8893a8"/><rect x="163.05" y="120.15" width="1.9" height="1.9" fill="#8893a8"/><rect x="165.70" y="117.70" width="1.6" height="1.6" fill="#8893a8"/><rect x="168.05" y="114.95" width="1.9" height="1.9" fill="#8893a8"/><rect x="168.05" y="120.15" width="1.9" height="1.9" fill="#8893a8"/><rect x="170.70" y="117.70" width="1.6" height="1.6" fill="#8893a8"/><rect x="173.05" y="114.95" width="1.9" height="1.9" fill="#8893a8"/><rect x="173.05" y="120.15" width="1.9" height="1.9" fill="#8893a8"/><rect x="175.70" y="117.70" width="1.6" height="1.6" fill="#8893a8"/><rect x="178.05" y="114.95" width="1.9" height="1.9" fill="#8893a8"/><rect x="178.05" y="120.15" width="1.9" height="1.9" fill="#8893a8"/><rect x="180.70" y="117.70" width="1.6" height="1.6" fill="#8893a8"/><rect x="183.05" y="114.95" width="1.9" height="1.9" fill="#8893a8"/><rect x="183.05" y="120.15" width="1.9" height="1.9" fill="#8893a8"/><rect x="185.70" y="117.70" width="1.6" height="1.6" fill="#8893a8"/><rect x="188.05" y="114.95" width="1.9" height="1.9" fill="#8893a8"/><rect x="188.05" y="120.15" width="1.9" height="1.9" fill="#8893a8"/><rect x="190.70" y="117.70" width="1.6" height="1.6" fill="#8893a8"/><rect x="193.05" y="114.95" width="1.9" height="1.9" fill="#8893a8"/><rect x="193.05" y="120.15" width="1.9" height="1.9" fill="#8893a8"/><rect x="195.70" y="117.70" width="1.6" height="1.6" fill="#8893a8"/><rect x="198.05" y="114.95" width="1.9" height="1.9" fill="#8893a8"/><rect x="198.05" y="120.15" width="1.9" height="1.9" fill="#8893a8"/><rect x="200.70" y="117.70" width="1.6" height="1.6" fill="#8893a8"/><rect x="203.05" y="114.95" width="1.9" height="1.9" fill="#8893a8"/><rect x="203.05" y="120.15" width="1.9" height="1.9" fill="#8893a8"/><rect x="205.70" y="117.70" width="1.6" height="1.6" fill="#8893a8"/><rect x="208.05" y="114.95" width="1.9" height="1.9" fill="#8893a8"/><rect x="208.05" y="120.15" width="1.9" height="1.9" fill="#8893a8"/><rect x="210.70" y="117.70" width="1.6" height="1.6" fill="#8893a8"/><rect x="213.05" y="114.95" width="1.9" height="1.9" fill="#8893a8"/><rect x="213.05" y="120.15" width="1.9" height="1.9" fill="#8893a8"/><rect x="215.70" y="117.70" width="1.6" height="1.6" fill="#8893a8"/><rect x="218.05" y="114.95" width="1.9" height="1.9" fill="#8893a8"/><rect x="218.05" y="120.15" width="1.9" height="1.9" fill="#8893a8"/><rect x="220.70" y="117.70" width="1.6" height="1.6" fill="#8893a8"/><rect x="223.05" y="114.95" width="1.9" height="1.9" fill="#8893a8"/><rect x="223.05" y="120.15" width="1.9" height="1.9" fill="#8893a8"/><rect x="225.70" y="117.70" width="1.6" height="1.6" fill="#8893a8"/><rect x="228.05" y="114.95" width="1.9" height="1.9" fill="#8893a8"/><rect x="228.05" y="120.15" width="1.9" height="1.9" fill="#8893a8"/><rect x="230.70" y="117.70" width="1.6" height="1.6" fill="#8893a8"/><rect x="233.05" y="114.95" width="1.9" height="1.9" fill="#8893a8"/><rect x="233.05" y="120.15" width="1.9" height="1.9" fill="#8893a8"/><rect x="235.70" y="117.70" width="1.6" height="1.6" fill="#8893a8"/><rect x="238.05" y="114.95" width="1.9" height="1.9" fill="#8893a8"/><rect x="238.05" y="120.15" width="1.9" height="1.9" fill="#8893a8"/><rect x="240.70" y="117.70" width="1.6" height="1.6" fill="#8893a8"/><rect x="243.05" y="114.95" width="1.9" height="1.9" fill="#8893a8"/><rect x="243.05" y="120.15" width="1.9" height="1.9" fill="#8893a8"/><rect x="245.70" y="117.70" width="1.6" height="1.6" fill="#8893a8"/><rect x="248.05" y="114.95" width="1.9" height="1.9" fill="#8893a8"/><rect x="248.05" y="120.15" width="1.9" height="1.9" fill="#8893a8"/></svg>
<svg style="position:absolute;left:0;top:0" width="1600" height="922"><rect x="103.05" y="384.75" width="1.9" height="1.9" fill="#8893a8"/><rect x="103.05" y="389.95" width="1.9" height="1.9" fill="#8893a8"/><rect x="105.70" y="387.50" width="1.6" height="1.6" fill="#8893a8"/><rect x="108.05" y="384.75" width="1.9" height="1.9" fill="#8893a8"/><rect x="108.05" y="389.95" width="1.9" height="1.9" fill="#8893a8"/><rect x="110.70" y="387.50" width="1.6" height="1.6" fill="#8893a8"/><rect x="113.05" y="384.75" width="1.9" height="1.9" fill="#8893a8"/><rect x="113.05" y="389.95" width="1.9" height="1.9" fill="#8893a8"/><rect x="115.70" y="387.50" width="1.6" height="1.6" fill="#8893a8"/><rect x="118.05" y="384.75" width="1.9" height="1.9" fill="#8893a8"/><rect x="118.05" y="389.95" width="1.9" height="1.9" fill="#8893a8"/><rect x="120.70" y="387.50" width="1.6" height="1.6" fill="#8893a8"/><rect x="123.05" y="384.75" width="1.9" height="1.9" fill="#8893a8"/><rect x="123.05" y="389.95" width="1.9" height="1.9" fill="#8893a8"/><rect x="125.70" y="387.50" width="1.6" height="1.6" fill="#8893a8"/><rect x="128.05" y="384.75" width="1.9" height="1.9" fill="#8893a8"/><rect x="128.05" y="389.95" width="1.9" height="1.9" fill="#8893a8"/><rect x="130.70" y="387.50" width="1.6" height="1.6" fill="#8893a8"/><rect x="133.05" y="384.75" width="1.9" height="1.9" fill="#8893a8"/><rect x="133.05" y="389.95" width="1.9" height="1.9" fill="#8893a8"/><rect x="135.70" y="387.50" width="1.6" height="1.6" fill="#8893a8"/><rect x="138.05" y="384.75" width="1.9" height="1.9" fill="#8893a8"/><rect x="138.05" y="389.95" width="1.9" height="1.9" fill="#8893a8"/><rect x="140.70" y="387.50" width="1.6" height="1.6" fill="#8893a8"/><rect x="143.05" y="384.75" width="1.9" height="1.9" fill="#8893a8"/><rect x="143.05" y="389.95" width="1.9" height="1.9" fill="#8893a8"/><rect x="145.70" y="387.50" width="1.6" height="1.6" fill="#8893a8"/><rect x="148.05" y="384.75" width="1.9" height="1.9" fill="#8893a8"/><rect x="148.05" y="389.95" width="1.9" height="1.9" fill="#8893a8"/><rect x="150.70" y="387.50" width="1.6" height="1.6" fill="#8893a8"/><rect x="153.05" y="384.75" width="1.9" height="1.9" fill="#8893a8"/><rect x="153.05" y="389.95" width="1.9" height="1.9" fill="#8893a8"/><rect x="155.70" y="387.50" width="1.6" height="1.6" fill="#8893a8"/><rect x="158.05" y="384.75" width="1.9" height="1.9" fill="#8893a8"/><rect x="158.05" y="389.95" width="1.9" height="1.9" fill="#8893a8"/><rect x="160.70" y="387.50" width="1.6" height="1.6" fill="#8893a8"/><rect x="163.05" y="384.75" width="1.9" height="1.9" fill="#8893a8"/><rect x="163.05" y="389.95" width="1.9" height="1.9" fill="#8893a8"/><rect x="165.70" y="387.50" width="1.6" height="1.6" fill="#8893a8"/><rect x="168.05" y="384.75" width="1.9" height="1.9" fill="#8893a8"/><rect x="168.05" y="389.95" width="1.9" height="1.9" fill="#8893a8"/><rect x="170.70" y="387.50" width="1.6" height="1.6" fill="#8893a8"/><rect x="173.05" y="384.75" width="1.9" height="1.9" fill="#8893a8"/><rect x="173.05" y="389.95" width="1.9" height="1.9" fill="#8893a8"/><rect x="175.70" y="387.50" width="1.6" height="1.6" fill="#8893a8"/><rect x="178.05" y="384.75" width="1.9" height="1.9" fill="#8893a8"/><rect x="178.05" y="389.95" width="1.9" height="1.9" fill="#8893a8"/><rect x="180.70" y="387.50" width="1.6" height="1.6" fill="#8893a8"/><rect x="183.05" y="384.75" width="1.9" height="1.9" fill="#8893a8"/><rect x="183.05" y="389.95" width="1.9" height="1.9" fill="#8893a8"/><rect x="185.70" y="387.50" width="1.6" height="1.6" fill="#8893a8"/><rect x="188.05" y="384.75" width="1.9" height="1.9" fill="#8893a8"/><rect x="188.05" y="389.95" width="1.9" height="1.9" fill="#8893a8"/><rect x="190.70" y="387.50" width="1.6" height="1.6" fill="#8893a8"/><rect x="193.05" y="384.75" width="1.9" height="1.9" fill="#8893a8"/><rect x="193.05" y="389.95" width="1.9" height="1.9" fill="#8893a8"/><rect x="195.70" y="387.50" width="1.6" height="1.6" fill="#8893a8"/><rect x="198.05" y="384.75" width="1.9" height="1.9" fill="#8893a8"/><rect x="198.05" y="389.95" width="1.9" height="1.9" fill="#8893a8"/><rect x="200.70" y="387.50" width="1.6" height="1.6" fill="#8893a8"/><rect x="203.05" y="384.75" width="1.9" height="1.9" fill="#8893a8"/><rect x="203.05" y="389.95" width="1.9" height="1.9" fill="#8893a8"/><rect x="205.70" y="387.50" width="1.6" height="1.6" fill="#8893a8"/><rect x="208.05" y="384.75" width="1.9" height="1.9" fill="#8893a8"/><rect x="208.05" y="389.95" width="1.9" height="1.9" fill="#8893a8"/><rect x="210.70" y="387.50" width="1.6" height="1.6" fill="#8893a8"/><rect x="213.05" y="384.75" width="1.9" height="1.9" fill="#8893a8"/><rect x="213.05" y="389.95" width="1.9" height="1.9" fill="#8893a8"/><rect x="215.70" y="387.50" width="1.6" height="1.6" fill="#8893a8"/><rect x="218.05" y="384.75" width="1.9" height="1.9" fill="#8893a8"/><rect x="218.05" y="389.95" width="1.9" height="1.9" fill="#8893a8"/><rect x="220.70" y="387.50" width="1.6" height="1.6" fill="#8893a8"/><rect x="223.05" y="384.75" width="1.9" height="1.9" fill="#8893a8"/><rect x="223.05" y="389.95" width="1.9" height="1.9" fill="#8893a8"/><rect x="225.70" y="387.50" width="1.6" height="1.6" fill="#8893a8"/><rect x="228.05" y="384.75" width="1.9" height="1.9" fill="#8893a8"/><rect x="228.05" y="389.95" width="1.9" height="1.9" fill="#8893a8"/><rect x="230.70" y="387.50" width="1.6" height="1.6" fill="#8893a8"/><rect x="233.05" y="384.75" width="1.9" height="1.9" fill="#8893a8"/><rect x="233.05" y="389.95" width="1.9" height="1.9" fill="#8893a8"/><rect x="235.70" y="387.50" width="1.6" height="1.6" fill="#8893a8"/><rect x="238.05" y="384.75" width="1.9" height="1.9" fill="#8893a8"/><rect x="238.05" y="389.95" width="1.9" height="1.9" fill="#8893a8"/><rect x="240.70" y="387.50" width="1.6" height="1.6" fill="#8893a8"/><rect x="243.05" y="384.75" width="1.9" height="1.9" fill="#8893a8"/><rect x="243.05" y="389.95" width="1.9" height="1.9" fill="#8893a8"/><rect x="245.70" y="387.50" width="1.6" height="1.6" fill="#8893a8"/><rect x="248.05" y="384.75" width="1.9" height="1.9" fill="#8893a8"/><rect x="248.05" y="389.95" width="1.9" height="1.9" fill="#8893a8"/></svg>
<svg style="position:absolute;left:0;top:0" width="1600" height="922"><rect x="133.05" y="663.95" width="1.9" height="1.9" fill="#8893a8"/><rect x="133.05" y="669.15" width="1.9" height="1.9" fill="#8893a8"/><rect x="135.70" y="666.70" width="1.6" height="1.6" fill="#8893a8"/><rect x="138.05" y="663.95" width="1.9" height="1.9" fill="#8893a8"/><rect x="138.05" y="669.15" width="1.9" height="1.9" fill="#8893a8"/><rect x="140.70" y="666.70" width="1.6" height="1.6" fill="#8893a8"/><rect x="143.05" y="663.95" width="1.9" height="1.9" fill="#8893a8"/><rect x="143.05" y="669.15" width="1.9" height="1.9" fill="#8893a8"/><rect x="145.70" y="666.70" width="1.6" height="1.6" fill="#8893a8"/><rect x="148.05" y="663.95" width="1.9" height="1.9" fill="#8893a8"/><rect x="148.05" y="669.15" width="1.9" height="1.9" fill="#8893a8"/><rect x="150.70" y="666.70" width="1.6" height="1.6" fill="#8893a8"/><rect x="153.05" y="663.95" width="1.9" height="1.9" fill="#8893a8"/><rect x="153.05" y="669.15" width="1.9" height="1.9" fill="#8893a8"/><rect x="155.70" y="666.70" width="1.6" height="1.6" fill="#8893a8"/><rect x="158.05" y="663.95" width="1.9" height="1.9" fill="#8893a8"/><rect x="158.05" y="669.15" width="1.9" height="1.9" fill="#8893a8"/><rect x="160.70" y="666.70" width="1.6" height="1.6" fill="#8893a8"/><rect x="163.05" y="663.95" width="1.9" height="1.9" fill="#8893a8"/><rect x="163.05" y="669.15" width="1.9" height="1.9" fill="#8893a8"/><rect x="165.70" y="666.70" width="1.6" height="1.6" fill="#8893a8"/><rect x="168.05" y="663.95" width="1.9" height="1.9" fill="#8893a8"/><rect x="168.05" y="669.15" width="1.9" height="1.9" fill="#8893a8"/><rect x="170.70" y="666.70" width="1.6" height="1.6" fill="#8893a8"/><rect x="173.05" y="663.95" width="1.9" height="1.9" fill="#8893a8"/><rect x="173.05" y="669.15" width="1.9" height="1.9" fill="#8893a8"/><rect x="175.70" y="666.70" width="1.6" height="1.6" fill="#8893a8"/><rect x="178.05" y="663.95" width="1.9" height="1.9" fill="#8893a8"/><rect x="178.05" y="669.15" width="1.9" height="1.9" fill="#8893a8"/><rect x="180.70" y="666.70" width="1.6" height="1.6" fill="#8893a8"/><rect x="183.05" y="663.95" width="1.9" height="1.9" fill="#8893a8"/><rect x="183.05" y="669.15" width="1.9" height="1.9" fill="#8893a8"/><rect x="185.70" y="666.70" width="1.6" height="1.6" fill="#8893a8"/><rect x="188.05" y="663.95" width="1.9" height="1.9" fill="#8893a8"/><rect x="188.05" y="669.15" width="1.9" height="1.9" fill="#8893a8"/><rect x="190.70" y="666.70" width="1.6" height="1.6" fill="#8893a8"/><rect x="193.05" y="663.95" width="1.9" height="1.9" fill="#8893a8"/><rect x="193.05" y="669.15" width="1.9" height="1.9" fill="#8893a8"/><rect x="195.70" y="666.70" width="1.6" height="1.6" fill="#8893a8"/><rect x="198.05" y="663.95" width="1.9" height="1.9" fill="#8893a8"/><rect x="198.05" y="669.15" width="1.9" height="1.9" fill="#8893a8"/><rect x="200.70" y="666.70" width="1.6" height="1.6" fill="#8893a8"/><rect x="203.05" y="663.95" width="1.9" height="1.9" fill="#8893a8"/><rect x="203.05" y="669.15" width="1.9" height="1.9" fill="#8893a8"/><rect x="205.70" y="666.70" width="1.6" height="1.6" fill="#8893a8"/><rect x="208.05" y="663.95" width="1.9" height="1.9" fill="#8893a8"/><rect x="208.05" y="669.15" width="1.9" height="1.9" fill="#8893a8"/><rect x="210.70" y="666.70" width="1.6" height="1.6" fill="#8893a8"/><rect x="213.05" y="663.95" width="1.9" height="1.9" fill="#8893a8"/><rect x="213.05" y="669.15" width="1.9" height="1.9" fill="#8893a8"/><rect x="215.70" y="666.70" width="1.6" height="1.6" fill="#8893a8"/><rect x="218.05" y="663.95" width="1.9" height="1.9" fill="#8893a8"/><rect x="218.05" y="669.15" width="1.9" height="1.9" fill="#8893a8"/><rect x="220.70" y="666.70" width="1.6" height="1.6" fill="#8893a8"/><rect x="223.05" y="663.95" width="1.9" height="1.9" fill="#8893a8"/><rect x="223.05" y="669.15" width="1.9" height="1.9" fill="#8893a8"/><rect x="225.70" y="666.70" width="1.6" height="1.6" fill="#8893a8"/><rect x="228.05" y="663.95" width="1.9" height="1.9" fill="#8893a8"/><rect x="228.05" y="669.15" width="1.9" height="1.9" fill="#8893a8"/><rect x="230.70" y="666.70" width="1.6" height="1.6" fill="#8893a8"/><rect x="233.05" y="663.95" width="1.9" height="1.9" fill="#8893a8"/><rect x="233.05" y="669.15" width="1.9" height="1.9" fill="#8893a8"/><rect x="235.70" y="666.70" width="1.6" height="1.6" fill="#8893a8"/><rect x="238.05" y="663.95" width="1.9" height="1.9" fill="#8893a8"/><rect x="238.05" y="669.15" width="1.9" height="1.9" fill="#8893a8"/><rect x="240.70" y="666.70" width="1.6" height="1.6" fill="#8893a8"/><rect x="243.05" y="663.95" width="1.9" height="1.9" fill="#8893a8"/><rect x="243.05" y="669.15" width="1.9" height="1.9" fill="#8893a8"/><rect x="245.70" y="666.70" width="1.6" height="1.6" fill="#8893a8"/><rect x="248.05" y="663.95" width="1.9" height="1.9" fill="#8893a8"/><rect x="248.05" y="669.15" width="1.9" height="1.9" fill="#8893a8"/></svg>
<svg style="position:absolute;left:0;top:0" width="1600" height="922"><rect x="338.05" y="114.95" width="1.9" height="1.9" fill="#bfae8a"/><rect x="338.05" y="120.15" width="1.9" height="1.9" fill="#bfae8a"/><rect x="340.70" y="117.70" width="1.6" height="1.6" fill="#bfae8a"/><rect x="343.05" y="114.95" width="1.9" height="1.9" fill="#bfae8a"/><rect x="343.05" y="120.15" width="1.9" height="1.9" fill="#bfae8a"/><rect x="345.70" y="117.70" width="1.6" height="1.6" fill="#bfae8a"/><rect x="348.05" y="114.95" width="1.9" height="1.9" fill="#bfae8a"/><rect x="348.05" y="120.15" width="1.9" height="1.9" fill="#bfae8a"/><rect x="350.70" y="117.70" width="1.6" height="1.6" fill="#bfae8a"/><rect x="353.05" y="114.95" width="1.9" height="1.9" fill="#bfae8a"/><rect x="353.05" y="120.15" width="1.9" height="1.9" fill="#bfae8a"/><rect x="355.70" y="117.70" width="1.6" height="1.6" fill="#bfae8a"/><rect x="358.05" y="114.95" width="1.9" height="1.9" fill="#bfae8a"/><rect x="358.05" y="120.15" width="1.9" height="1.9" fill="#bfae8a"/><rect x="360.70" y="117.70" width="1.6" height="1.6" fill="#bfae8a"/><rect x="363.05" y="114.95" width="1.9" height="1.9" fill="#bfae8a"/><rect x="363.05" y="120.15" width="1.9" height="1.9" fill="#bfae8a"/><rect x="365.70" y="117.70" width="1.6" height="1.6" fill="#bfae8a"/><rect x="368.05" y="114.95" width="1.9" height="1.9" fill="#bfae8a"/><rect x="368.05" y="120.15" width="1.9" height="1.9" fill="#bfae8a"/><rect x="370.70" y="117.70" width="1.6" height="1.6" fill="#bfae8a"/><rect x="373.05" y="114.95" width="1.9" height="1.9" fill="#bfae8a"/><rect x="373.05" y="120.15" width="1.9" height="1.9" fill="#bfae8a"/><rect x="375.70" y="117.70" width="1.6" height="1.6" fill="#bfae8a"/><rect x="378.05" y="114.95" width="1.9" height="1.9" fill="#bfae8a"/><rect x="378.05" y="120.15" width="1.9" height="1.9" fill="#bfae8a"/><rect x="380.70" y="117.70" width="1.6" height="1.6" fill="#bfae8a"/><rect x="383.05" y="114.95" width="1.9" height="1.9" fill="#bfae8a"/><rect x="383.05" y="120.15" width="1.9" height="1.9" fill="#bfae8a"/><rect x="385.70" y="117.70" width="1.6" height="1.6" fill="#bfae8a"/><rect x="388.05" y="114.95" width="1.9" height="1.9" fill="#bfae8a"/><rect x="388.05" y="120.15" width="1.9" height="1.9" fill="#bfae8a"/><rect x="390.70" y="117.70" width="1.6" height="1.6" fill="#bfae8a"/><rect x="393.05" y="114.95" width="1.9" height="1.9" fill="#bfae8a"/><rect x="393.05" y="120.15" width="1.9" height="1.9" fill="#bfae8a"/><rect x="395.70" y="117.70" width="1.6" height="1.6" fill="#bfae8a"/><rect x="398.05" y="114.95" width="1.9" height="1.9" fill="#bfae8a"/><rect x="398.05" y="120.15" width="1.9" height="1.9" fill="#bfae8a"/><rect x="400.70" y="117.70" width="1.6" height="1.6" fill="#bfae8a"/><rect x="403.05" y="114.95" width="1.9" height="1.9" fill="#bfae8a"/><rect x="403.05" y="120.15" width="1.9" height="1.9" fill="#bfae8a"/><rect x="405.70" y="117.70" width="1.6" height="1.6" fill="#bfae8a"/><rect x="408.05" y="114.95" width="1.9" height="1.9" fill="#bfae8a"/><rect x="408.05" y="120.15" width="1.9" height="1.9" fill="#bfae8a"/><rect x="410.70" y="117.70" width="1.6" height="1.6" fill="#bfae8a"/><rect x="413.05" y="114.95" width="1.9" height="1.9" fill="#bfae8a"/><rect x="413.05" y="120.15" width="1.9" height="1.9" fill="#bfae8a"/><rect x="415.70" y="117.70" width="1.6" height="1.6" fill="#bfae8a"/><rect x="418.05" y="114.95" width="1.9" height="1.9" fill="#bfae8a"/><rect x="418.05" y="120.15" width="1.9" height="1.9" fill="#bfae8a"/><rect x="420.70" y="117.70" width="1.6" height="1.6" fill="#bfae8a"/><rect x="423.05" y="114.95" width="1.9" height="1.9" fill="#bfae8a"/><rect x="423.05" y="120.15" width="1.9" height="1.9" fill="#bfae8a"/><rect x="425.70" y="117.70" width="1.6" height="1.6" fill="#bfae8a"/><rect x="428.05" y="114.95" width="1.9" height="1.9" fill="#bfae8a"/><rect x="428.05" y="120.15" width="1.9" height="1.9" fill="#bfae8a"/><rect x="430.70" y="117.70" width="1.6" height="1.6" fill="#bfae8a"/><rect x="433.05" y="114.95" width="1.9" height="1.9" fill="#bfae8a"/><rect x="433.05" y="120.15" width="1.9" height="1.9" fill="#bfae8a"/><rect x="435.70" y="117.70" width="1.6" height="1.6" fill="#bfae8a"/><rect x="438.05" y="114.95" width="1.9" height="1.9" fill="#bfae8a"/><rect x="438.05" y="120.15" width="1.9" height="1.9" fill="#bfae8a"/><rect x="440.70" y="117.70" width="1.6" height="1.6" fill="#bfae8a"/><rect x="443.05" y="114.95" width="1.9" height="1.9" fill="#bfae8a"/><rect x="443.05" y="120.15" width="1.9" height="1.9" fill="#bfae8a"/><rect x="445.70" y="117.70" width="1.6" height="1.6" fill="#bfae8a"/><rect x="448.05" y="114.95" width="1.9" height="1.9" fill="#bfae8a"/><rect x="448.05" y="120.15" width="1.9" height="1.9" fill="#bfae8a"/><rect x="450.70" y="117.70" width="1.6" height="1.6" fill="#bfae8a"/><rect x="453.05" y="114.95" width="1.9" height="1.9" fill="#bfae8a"/><rect x="453.05" y="120.15" width="1.9" height="1.9" fill="#bfae8a"/><rect x="455.70" y="117.70" width="1.6" height="1.6" fill="#bfae8a"/><rect x="458.05" y="114.95" width="1.9" height="1.9" fill="#bfae8a"/><rect x="458.05" y="120.15" width="1.9" height="1.9" fill="#bfae8a"/><rect x="460.70" y="117.70" width="1.6" height="1.6" fill="#bfae8a"/><rect x="463.05" y="114.95" width="1.9" height="1.9" fill="#bfae8a"/><rect x="463.05" y="120.15" width="1.9" height="1.9" fill="#bfae8a"/><rect x="465.70" y="117.70" width="1.6" height="1.6" fill="#bfae8a"/><rect x="468.05" y="114.95" width="1.9" height="1.9" fill="#bfae8a"/><rect x="468.05" y="120.15" width="1.9" height="1.9" fill="#bfae8a"/><rect x="470.70" y="117.70" width="1.6" height="1.6" fill="#bfae8a"/><rect x="473.05" y="114.95" width="1.9" height="1.9" fill="#bfae8a"/><rect x="473.05" y="120.15" width="1.9" height="1.9" fill="#bfae8a"/><rect x="475.70" y="117.70" width="1.6" height="1.6" fill="#bfae8a"/><rect x="478.05" y="114.95" width="1.9" height="1.9" fill="#bfae8a"/><rect x="478.05" y="120.15" width="1.9" height="1.9" fill="#bfae8a"/><rect x="480.70" y="117.70" width="1.6" height="1.6" fill="#bfae8a"/><rect x="483.05" y="114.95" width="1.9" height="1.9" fill="#bfae8a"/><rect x="483.05" y="120.15" width="1.9" height="1.9" fill="#bfae8a"/><rect x="485.70" y="117.70" width="1.6" height="1.6" fill="#bfae8a"/><rect x="488.05" y="114.95" width="1.9" height="1.9" fill="#bfae8a"/><rect x="488.05" y="120.15" width="1.9" height="1.9" fill="#bfae8a"/><rect x="490.70" y="117.70" width="1.6" height="1.6" fill="#bfae8a"/><rect x="493.05" y="114.95" width="1.9" height="1.9" fill="#bfae8a"/><rect x="493.05" y="120.15" width="1.9" height="1.9" fill="#bfae8a"/><rect x="495.70" y="117.70" width="1.6" height="1.6" fill="#bfae8a"/><rect x="498.05" y="114.95" width="1.9" height="1.9" fill="#bfae8a"/><rect x="498.05" y="120.15" width="1.9" height="1.9" fill="#bfae8a"/><rect x="500.70" y="117.70" width="1.6" height="1.6" fill="#bfae8a"/><rect x="503.05" y="114.95" width="1.9" height="1.9" fill="#bfae8a"/><rect x="503.05" y="120.15" width="1.9" height="1.9" fill="#bfae8a"/><rect x="505.70" y="117.70" width="1.6" height="1.6" fill="#bfae8a"/><rect x="508.05" y="114.95" width="1.9" height="1.9" fill="#bfae8a"/><rect x="508.05" y="120.15" width="1.9" height="1.9" fill="#bfae8a"/><rect x="510.70" y="117.70" width="1.6" height="1.6" fill="#bfae8a"/><rect x="513.05" y="114.95" width="1.9" height="1.9" fill="#bfae8a"/><rect x="513.05" y="120.15" width="1.9" height="1.9" fill="#bfae8a"/><rect x="515.70" y="117.70" width="1.6" height="1.6" fill="#bfae8a"/><rect x="518.05" y="114.95" width="1.9" height="1.9" fill="#bfae8a"/><rect x="518.05" y="120.15" width="1.9" height="1.9" fill="#bfae8a"/><rect x="520.70" y="117.70" width="1.6" height="1.6" fill="#bfae8a"/><rect x="523.05" y="114.95" width="1.9" height="1.9" fill="#bfae8a"/><rect x="523.05" y="120.15" width="1.9" height="1.9" fill="#bfae8a"/><rect x="525.70" y="117.70" width="1.6" height="1.6" fill="#bfae8a"/><rect x="528.05" y="114.95" width="1.9" height="1.9" fill="#bfae8a"/><rect x="528.05" y="120.15" width="1.9" height="1.9" fill="#bfae8a"/><rect x="530.70" y="117.70" width="1.6" height="1.6" fill="#bfae8a"/><rect x="533.05" y="114.95" width="1.9" height="1.9" fill="#bfae8a"/><rect x="533.05" y="120.15" width="1.9" height="1.9" fill="#bfae8a"/><rect x="535.70" y="117.70" width="1.6" height="1.6" fill="#bfae8a"/><rect x="538.05" y="114.95" width="1.9" height="1.9" fill="#bfae8a"/><rect x="538.05" y="120.15" width="1.9" height="1.9" fill="#bfae8a"/><rect x="540.70" y="117.70" width="1.6" height="1.6" fill="#bfae8a"/><rect x="543.05" y="114.95" width="1.9" height="1.9" fill="#bfae8a"/><rect x="543.05" y="120.15" width="1.9" height="1.9" fill="#bfae8a"/><rect x="545.70" y="117.70" width="1.6" height="1.6" fill="#bfae8a"/><rect x="548.05" y="114.95" width="1.9" height="1.9" fill="#bfae8a"/><rect x="548.05" y="120.15" width="1.9" height="1.9" fill="#bfae8a"/><rect x="550.70" y="117.70" width="1.6" height="1.6" fill="#bfae8a"/><rect x="553.05" y="114.95" width="1.9" height="1.9" fill="#bfae8a"/><rect x="553.05" y="120.15" width="1.9" height="1.9" fill="#bfae8a"/><rect x="555.70" y="117.70" width="1.6" height="1.6" fill="#bfae8a"/><rect x="558.05" y="114.95" width="1.9" height="1.9" fill="#bfae8a"/><rect x="558.05" y="120.15" width="1.9" height="1.9" fill="#bfae8a"/><rect x="560.70" y="117.70" width="1.6" height="1.6" fill="#bfae8a"/><rect x="563.05" y="114.95" width="1.9" height="1.9" fill="#bfae8a"/><rect x="563.05" y="120.15" width="1.9" height="1.9" fill="#bfae8a"/><rect x="565.70" y="117.70" width="1.6" height="1.6" fill="#bfae8a"/><rect x="568.05" y="114.95" width="1.9" height="1.9" fill="#bfae8a"/><rect x="568.05" y="120.15" width="1.9" height="1.9" fill="#bfae8a"/><rect x="570.70" y="117.70" width="1.6" height="1.6" fill="#bfae8a"/><rect x="573.05" y="114.95" width="1.9" height="1.9" fill="#bfae8a"/><rect x="573.05" y="120.15" width="1.9" height="1.9" fill="#bfae8a"/><rect x="575.70" y="117.70" width="1.6" height="1.6" fill="#bfae8a"/><rect x="578.05" y="114.95" width="1.9" height="1.9" fill="#bfae8a"/><rect x="578.05" y="120.15" width="1.9" height="1.9" fill="#bfae8a"/><rect x="580.70" y="117.70" width="1.6" height="1.6" fill="#bfae8a"/><rect x="583.05" y="114.95" width="1.9" height="1.9" fill="#bfae8a"/><rect x="583.05" y="120.15" width="1.9" height="1.9" fill="#bfae8a"/><rect x="585.70" y="117.70" width="1.6" height="1.6" fill="#bfae8a"/><rect x="588.05" y="114.95" width="1.9" height="1.9" fill="#bfae8a"/><rect x="588.05" y="120.15" width="1.9" height="1.9" fill="#bfae8a"/><rect x="590.70" y="117.70" width="1.6" height="1.6" fill="#bfae8a"/><rect x="593.05" y="114.95" width="1.9" height="1.9" fill="#bfae8a"/><rect x="593.05" y="120.15" width="1.9" height="1.9" fill="#bfae8a"/><rect x="595.70" y="117.70" width="1.6" height="1.6" fill="#bfae8a"/><rect x="598.05" y="114.95" width="1.9" height="1.9" fill="#bfae8a"/><rect x="598.05" y="120.15" width="1.9" height="1.9" fill="#bfae8a"/><rect x="600.70" y="117.70" width="1.6" height="1.6" fill="#bfae8a"/><rect x="603.05" y="114.95" width="1.9" height="1.9" fill="#bfae8a"/><rect x="603.05" y="120.15" width="1.9" height="1.9" fill="#bfae8a"/><rect x="605.70" y="117.70" width="1.6" height="1.6" fill="#bfae8a"/><rect x="608.05" y="114.95" width="1.9" height="1.9" fill="#bfae8a"/><rect x="608.05" y="120.15" width="1.9" height="1.9" fill="#bfae8a"/><rect x="610.70" y="117.70" width="1.6" height="1.6" fill="#bfae8a"/><rect x="613.05" y="114.95" width="1.9" height="1.9" fill="#bfae8a"/><rect x="613.05" y="120.15" width="1.9" height="1.9" fill="#bfae8a"/><rect x="615.70" y="117.70" width="1.6" height="1.6" fill="#bfae8a"/><rect x="618.05" y="114.95" width="1.9" height="1.9" fill="#bfae8a"/><rect x="618.05" y="120.15" width="1.9" height="1.9" fill="#bfae8a"/><rect x="620.70" y="117.70" width="1.6" height="1.6" fill="#bfae8a"/><rect x="623.05" y="114.95" width="1.9" height="1.9" fill="#bfae8a"/><rect x="623.05" y="120.15" width="1.9" height="1.9" fill="#bfae8a"/><rect x="625.70" y="117.70" width="1.6" height="1.6" fill="#bfae8a"/><rect x="628.05" y="114.95" width="1.9" height="1.9" fill="#bfae8a"/><rect x="628.05" y="120.15" width="1.9" height="1.9" fill="#bfae8a"/><rect x="630.70" y="117.70" width="1.6" height="1.6" fill="#bfae8a"/><rect x="633.05" y="114.95" width="1.9" height="1.9" fill="#bfae8a"/><rect x="633.05" y="120.15" width="1.9" height="1.9" fill="#bfae8a"/><rect x="635.70" y="117.70" width="1.6" height="1.6" fill="#bfae8a"/><rect x="638.05" y="114.95" width="1.9" height="1.9" fill="#bfae8a"/><rect x="638.05" y="120.15" width="1.9" height="1.9" fill="#bfae8a"/><rect x="640.70" y="117.70" width="1.6" height="1.6" fill="#bfae8a"/><rect x="643.05" y="114.95" width="1.9" height="1.9" fill="#bfae8a"/><rect x="643.05" y="120.15" width="1.9" height="1.9" fill="#bfae8a"/><rect x="645.70" y="117.70" width="1.6" height="1.6" fill="#bfae8a"/><rect x="648.05" y="114.95" width="1.9" height="1.9" fill="#bfae8a"/><rect x="648.05" y="120.15" width="1.9" height="1.9" fill="#bfae8a"/><rect x="650.70" y="117.70" width="1.6" height="1.6" fill="#bfae8a"/><rect x="653.05" y="114.95" width="1.9" height="1.9" fill="#bfae8a"/><rect x="653.05" y="120.15" width="1.9" height="1.9" fill="#bfae8a"/><rect x="655.70" y="117.70" width="1.6" height="1.6" fill="#bfae8a"/><rect x="658.05" y="114.95" width="1.9" height="1.9" fill="#bfae8a"/><rect x="658.05" y="120.15" width="1.9" height="1.9" fill="#bfae8a"/><rect x="660.70" y="117.70" width="1.6" height="1.6" fill="#bfae8a"/><rect x="663.05" y="114.95" width="1.9" height="1.9" fill="#bfae8a"/><rect x="663.05" y="120.15" width="1.9" height="1.9" fill="#bfae8a"/><rect x="665.70" y="117.70" width="1.6" height="1.6" fill="#bfae8a"/><rect x="668.05" y="114.95" width="1.9" height="1.9" fill="#bfae8a"/><rect x="668.05" y="120.15" width="1.9" height="1.9" fill="#bfae8a"/><rect x="670.70" y="117.70" width="1.6" height="1.6" fill="#bfae8a"/><rect x="673.05" y="114.95" width="1.9" height="1.9" fill="#bfae8a"/><rect x="673.05" y="120.15" width="1.9" height="1.9" fill="#bfae8a"/><rect x="675.70" y="117.70" width="1.6" height="1.6" fill="#bfae8a"/><rect x="678.05" y="114.95" width="1.9" height="1.9" fill="#bfae8a"/><rect x="678.05" y="120.15" width="1.9" height="1.9" fill="#bfae8a"/><rect x="680.70" y="117.70" width="1.6" height="1.6" fill="#bfae8a"/><rect x="683.05" y="114.95" width="1.9" height="1.9" fill="#bfae8a"/><rect x="683.05" y="120.15" width="1.9" height="1.9" fill="#bfae8a"/><rect x="685.70" y="117.70" width="1.6" height="1.6" fill="#bfae8a"/><rect x="688.05" y="114.95" width="1.9" height="1.9" fill="#bfae8a"/><rect x="688.05" y="120.15" width="1.9" height="1.9" fill="#bfae8a"/><rect x="690.70" y="117.70" width="1.6" height="1.6" fill="#bfae8a"/><rect x="693.05" y="114.95" width="1.9" height="1.9" fill="#bfae8a"/><rect x="693.05" y="120.15" width="1.9" height="1.9" fill="#bfae8a"/><rect x="695.70" y="117.70" width="1.6" height="1.6" fill="#bfae8a"/><rect x="698.05" y="114.95" width="1.9" height="1.9" fill="#bfae8a"/><rect x="698.05" y="120.15" width="1.9" height="1.9" fill="#bfae8a"/><rect x="700.70" y="117.70" width="1.6" height="1.6" fill="#bfae8a"/><rect x="703.05" y="114.95" width="1.9" height="1.9" fill="#bfae8a"/><rect x="703.05" y="120.15" width="1.9" height="1.9" fill="#bfae8a"/><rect x="705.70" y="117.70" width="1.6" height="1.6" fill="#bfae8a"/><rect x="708.05" y="114.95" width="1.9" height="1.9" fill="#bfae8a"/><rect x="708.05" y="120.15" width="1.9" height="1.9" fill="#bfae8a"/><rect x="710.70" y="117.70" width="1.6" height="1.6" fill="#bfae8a"/><rect x="713.05" y="114.95" width="1.9" height="1.9" fill="#bfae8a"/><rect x="713.05" y="120.15" width="1.9" height="1.9" fill="#bfae8a"/><rect x="715.70" y="117.70" width="1.6" height="1.6" fill="#bfae8a"/><rect x="718.05" y="114.95" width="1.9" height="1.9" fill="#bfae8a"/><rect x="718.05" y="120.15" width="1.9" height="1.9" fill="#bfae8a"/><rect x="720.70" y="117.70" width="1.6" height="1.6" fill="#bfae8a"/><rect x="723.05" y="114.95" width="1.9" height="1.9" fill="#bfae8a"/><rect x="723.05" y="120.15" width="1.9" height="1.9" fill="#bfae8a"/><rect x="725.70" y="117.70" width="1.6" height="1.6" fill="#bfae8a"/><rect x="728.05" y="114.95" width="1.9" height="1.9" fill="#bfae8a"/><rect x="728.05" y="120.15" width="1.9" height="1.9" fill="#bfae8a"/><rect x="730.70" y="117.70" width="1.6" height="1.6" fill="#bfae8a"/><rect x="733.05" y="114.95" width="1.9" height="1.9" fill="#bfae8a"/><rect x="733.05" y="120.15" width="1.9" height="1.9" fill="#bfae8a"/><rect x="735.70" y="117.70" width="1.6" height="1.6" fill="#bfae8a"/><rect x="738.05" y="114.95" width="1.9" height="1.9" fill="#bfae8a"/><rect x="738.05" y="120.15" width="1.9" height="1.9" fill="#bfae8a"/><rect x="740.70" y="117.70" width="1.6" height="1.6" fill="#bfae8a"/><rect x="743.05" y="114.95" width="1.9" height="1.9" fill="#bfae8a"/><rect x="743.05" y="120.15" width="1.9" height="1.9" fill="#bfae8a"/><rect x="745.70" y="117.70" width="1.6" height="1.6" fill="#bfae8a"/><rect x="748.05" y="114.95" width="1.9" height="1.9" fill="#bfae8a"/><rect x="748.05" y="120.15" width="1.9" height="1.9" fill="#bfae8a"/><rect x="750.70" y="117.70" width="1.6" height="1.6" fill="#bfae8a"/><rect x="753.05" y="114.95" width="1.9" height="1.9" fill="#bfae8a"/><rect x="753.05" y="120.15" width="1.9" height="1.9" fill="#bfae8a"/><rect x="755.70" y="117.70" width="1.6" height="1.6" fill="#bfae8a"/><rect x="758.05" y="114.95" width="1.9" height="1.9" fill="#bfae8a"/><rect x="758.05" y="120.15" width="1.9" height="1.9" fill="#bfae8a"/><rect x="760.70" y="117.70" width="1.6" height="1.6" fill="#bfae8a"/><rect x="763.05" y="114.95" width="1.9" height="1.9" fill="#bfae8a"/><rect x="763.05" y="120.15" width="1.9" height="1.9" fill="#bfae8a"/><rect x="765.70" y="117.70" width="1.6" height="1.6" fill="#bfae8a"/><rect x="768.05" y="114.95" width="1.9" height="1.9" fill="#bfae8a"/><rect x="768.05" y="120.15" width="1.9" height="1.9" fill="#bfae8a"/><rect x="770.70" y="117.70" width="1.6" height="1.6" fill="#bfae8a"/><rect x="773.05" y="114.95" width="1.9" height="1.9" fill="#bfae8a"/><rect x="773.05" y="120.15" width="1.9" height="1.9" fill="#bfae8a"/><rect x="775.70" y="117.70" width="1.6" height="1.6" fill="#bfae8a"/><rect x="778.05" y="114.95" width="1.9" height="1.9" fill="#bfae8a"/><rect x="778.05" y="120.15" width="1.9" height="1.9" fill="#bfae8a"/><rect x="780.70" y="117.70" width="1.6" height="1.6" fill="#bfae8a"/><rect x="783.05" y="114.95" width="1.9" height="1.9" fill="#bfae8a"/><rect x="783.05" y="120.15" width="1.9" height="1.9" fill="#bfae8a"/><rect x="785.70" y="117.70" width="1.6" height="1.6" fill="#bfae8a"/><rect x="788.05" y="114.95" width="1.9" height="1.9" fill="#bfae8a"/><rect x="788.05" y="120.15" width="1.9" height="1.9" fill="#bfae8a"/><rect x="790.70" y="117.70" width="1.6" height="1.6" fill="#bfae8a"/><rect x="793.05" y="114.95" width="1.9" height="1.9" fill="#bfae8a"/><rect x="793.05" y="120.15" width="1.9" height="1.9" fill="#bfae8a"/><rect x="795.70" y="117.70" width="1.6" height="1.6" fill="#bfae8a"/><rect x="798.05" y="114.95" width="1.9" height="1.9" fill="#bfae8a"/><rect x="798.05" y="120.15" width="1.9" height="1.9" fill="#bfae8a"/><rect x="800.70" y="117.70" width="1.6" height="1.6" fill="#bfae8a"/><rect x="803.05" y="114.95" width="1.9" height="1.9" fill="#bfae8a"/><rect x="803.05" y="120.15" width="1.9" height="1.9" fill="#bfae8a"/><rect x="805.70" y="117.70" width="1.6" height="1.6" fill="#bfae8a"/><rect x="808.05" y="114.95" width="1.9" height="1.9" fill="#bfae8a"/><rect x="808.05" y="120.15" width="1.9" height="1.9" fill="#bfae8a"/><rect x="810.70" y="117.70" width="1.6" height="1.6" fill="#bfae8a"/><rect x="813.05" y="114.95" width="1.9" height="1.9" fill="#bfae8a"/><rect x="813.05" y="120.15" width="1.9" height="1.9" fill="#bfae8a"/><rect x="815.70" y="117.70" width="1.6" height="1.6" fill="#bfae8a"/><rect x="818.05" y="114.95" width="1.9" height="1.9" fill="#bfae8a"/><rect x="818.05" y="120.15" width="1.9" height="1.9" fill="#bfae8a"/><rect x="820.70" y="117.70" width="1.6" height="1.6" fill="#bfae8a"/><rect x="823.05" y="114.95" width="1.9" height="1.9" fill="#bfae8a"/><rect x="823.05" y="120.15" width="1.9" height="1.9" fill="#bfae8a"/><rect x="825.70" y="117.70" width="1.6" height="1.6" fill="#bfae8a"/><rect x="828.05" y="114.95" width="1.9" height="1.9" fill="#bfae8a"/><rect x="828.05" y="120.15" width="1.9" height="1.9" fill="#bfae8a"/><rect x="830.70" y="117.70" width="1.6" height="1.6" fill="#bfae8a"/><rect x="833.05" y="114.95" width="1.9" height="1.9" fill="#bfae8a"/><rect x="833.05" y="120.15" width="1.9" height="1.9" fill="#bfae8a"/><rect x="835.70" y="117.70" width="1.6" height="1.6" fill="#bfae8a"/><rect x="838.05" y="114.95" width="1.9" height="1.9" fill="#bfae8a"/><rect x="838.05" y="120.15" width="1.9" height="1.9" fill="#bfae8a"/><rect x="840.70" y="117.70" width="1.6" height="1.6" fill="#bfae8a"/><rect x="843.05" y="114.95" width="1.9" height="1.9" fill="#bfae8a"/><rect x="843.05" y="120.15" width="1.9" height="1.9" fill="#bfae8a"/><rect x="845.70" y="117.70" width="1.6" height="1.6" fill="#bfae8a"/><rect x="848.05" y="114.95" width="1.9" height="1.9" fill="#bfae8a"/><rect x="848.05" y="120.15" width="1.9" height="1.9" fill="#bfae8a"/><rect x="850.70" y="117.70" width="1.6" height="1.6" fill="#bfae8a"/><rect x="853.05" y="114.95" width="1.9" height="1.9" fill="#bfae8a"/><rect x="853.05" y="120.15" width="1.9" height="1.9" fill="#bfae8a"/><rect x="855.70" y="117.70" width="1.6" height="1.6" fill="#bfae8a"/><rect x="858.05" y="114.95" width="1.9" height="1.9" fill="#bfae8a"/><rect x="858.05" y="120.15" width="1.9" height="1.9" fill="#bfae8a"/><rect x="860.70" y="117.70" width="1.6" height="1.6" fill="#bfae8a"/><rect x="863.05" y="114.95" width="1.9" height="1.9" fill="#bfae8a"/><rect x="863.05" y="120.15" width="1.9" height="1.9" fill="#bfae8a"/><rect x="865.70" y="117.70" width="1.6" height="1.6" fill="#bfae8a"/><rect x="868.05" y="114.95" width="1.9" height="1.9" fill="#bfae8a"/><rect x="868.05" y="120.15" width="1.9" height="1.9" fill="#bfae8a"/><rect x="870.70" y="117.70" width="1.6" height="1.6" fill="#bfae8a"/><rect x="873.05" y="114.95" width="1.9" height="1.9" fill="#bfae8a"/><rect x="873.05" y="120.15" width="1.9" height="1.9" fill="#bfae8a"/><rect x="875.70" y="117.70" width="1.6" height="1.6" fill="#bfae8a"/><rect x="878.05" y="114.95" width="1.9" height="1.9" fill="#bfae8a"/><rect x="878.05" y="120.15" width="1.9" height="1.9" fill="#bfae8a"/><rect x="880.70" y="117.70" width="1.6" height="1.6" fill="#bfae8a"/><rect x="883.05" y="114.95" width="1.9" height="1.9" fill="#bfae8a"/><rect x="883.05" y="120.15" width="1.9" height="1.9" fill="#bfae8a"/><rect x="885.70" y="117.70" width="1.6" height="1.6" fill="#bfae8a"/><rect x="888.05" y="114.95" width="1.9" height="1.9" fill="#bfae8a"/><rect x="888.05" y="120.15" width="1.9" height="1.9" fill="#bfae8a"/><rect x="890.70" y="117.70" width="1.6" height="1.6" fill="#bfae8a"/><rect x="893.05" y="114.95" width="1.9" height="1.9" fill="#bfae8a"/><rect x="893.05" y="120.15" width="1.9" height="1.9" fill="#bfae8a"/><rect x="895.70" y="117.70" width="1.6" height="1.6" fill="#bfae8a"/><rect x="898.05" y="114.95" width="1.9" height="1.9" fill="#bfae8a"/><rect x="898.05" y="120.15" width="1.9" height="1.9" fill="#bfae8a"/><rect x="900.70" y="117.70" width="1.6" height="1.6" fill="#bfae8a"/><rect x="903.05" y="114.95" width="1.9" height="1.9" fill="#bfae8a"/><rect x="903.05" y="120.15" width="1.9" height="1.9" fill="#bfae8a"/><rect x="905.70" y="117.70" width="1.6" height="1.6" fill="#bfae8a"/><rect x="908.05" y="114.95" width="1.9" height="1.9" fill="#bfae8a"/><rect x="908.05" y="120.15" width="1.9" height="1.9" fill="#bfae8a"/><rect x="910.70" y="117.70" width="1.6" height="1.6" fill="#bfae8a"/><rect x="913.05" y="114.95" width="1.9" height="1.9" fill="#bfae8a"/><rect x="913.05" y="120.15" width="1.9" height="1.9" fill="#bfae8a"/><rect x="915.70" y="117.70" width="1.6" height="1.6" fill="#bfae8a"/><rect x="918.05" y="114.95" width="1.9" height="1.9" fill="#bfae8a"/><rect x="918.05" y="120.15" width="1.9" height="1.9" fill="#bfae8a"/><rect x="920.70" y="117.70" width="1.6" height="1.6" fill="#bfae8a"/><rect x="923.05" y="114.95" width="1.9" height="1.9" fill="#bfae8a"/><rect x="923.05" y="120.15" width="1.9" height="1.9" fill="#bfae8a"/><rect x="925.70" y="117.70" width="1.6" height="1.6" fill="#bfae8a"/><rect x="928.05" y="114.95" width="1.9" height="1.9" fill="#bfae8a"/><rect x="928.05" y="120.15" width="1.9" height="1.9" fill="#bfae8a"/><rect x="930.70" y="117.70" width="1.6" height="1.6" fill="#bfae8a"/><rect x="933.05" y="114.95" width="1.9" height="1.9" fill="#bfae8a"/><rect x="933.05" y="120.15" width="1.9" height="1.9" fill="#bfae8a"/><rect x="935.70" y="117.70" width="1.6" height="1.6" fill="#bfae8a"/><rect x="938.05" y="114.95" width="1.9" height="1.9" fill="#bfae8a"/><rect x="938.05" y="120.15" width="1.9" height="1.9" fill="#bfae8a"/><rect x="940.70" y="117.70" width="1.6" height="1.6" fill="#bfae8a"/><rect x="943.05" y="114.95" width="1.9" height="1.9" fill="#bfae8a"/><rect x="943.05" y="120.15" width="1.9" height="1.9" fill="#bfae8a"/><rect x="945.70" y="117.70" width="1.6" height="1.6" fill="#bfae8a"/><rect x="948.05" y="114.95" width="1.9" height="1.9" fill="#bfae8a"/><rect x="948.05" y="120.15" width="1.9" height="1.9" fill="#bfae8a"/><rect x="950.70" y="117.70" width="1.6" height="1.6" fill="#bfae8a"/><rect x="953.05" y="114.95" width="1.9" height="1.9" fill="#bfae8a"/><rect x="953.05" y="120.15" width="1.9" height="1.9" fill="#bfae8a"/><rect x="955.70" y="117.70" width="1.6" height="1.6" fill="#bfae8a"/><rect x="958.05" y="114.95" width="1.9" height="1.9" fill="#bfae8a"/><rect x="958.05" y="120.15" width="1.9" height="1.9" fill="#bfae8a"/><rect x="960.70" y="117.70" width="1.6" height="1.6" fill="#bfae8a"/><rect x="963.05" y="114.95" width="1.9" height="1.9" fill="#bfae8a"/><rect x="963.05" y="120.15" width="1.9" height="1.9" fill="#bfae8a"/><rect x="965.70" y="117.70" width="1.6" height="1.6" fill="#bfae8a"/><rect x="968.05" y="114.95" width="1.9" height="1.9" fill="#bfae8a"/><rect x="968.05" y="120.15" width="1.9" height="1.9" fill="#bfae8a"/><rect x="970.70" y="117.70" width="1.6" height="1.6" fill="#bfae8a"/><rect x="973.05" y="114.95" width="1.9" height="1.9" fill="#bfae8a"/><rect x="973.05" y="120.15" width="1.9" height="1.9" fill="#bfae8a"/><rect x="975.70" y="117.70" width="1.6" height="1.6" fill="#bfae8a"/><rect x="978.05" y="114.95" width="1.9" height="1.9" fill="#bfae8a"/><rect x="978.05" y="120.15" width="1.9" height="1.9" fill="#bfae8a"/><rect x="980.70" y="117.70" width="1.6" height="1.6" fill="#bfae8a"/><rect x="983.05" y="114.95" width="1.9" height="1.9" fill="#bfae8a"/><rect x="983.05" y="120.15" width="1.9" height="1.9" fill="#bfae8a"/><rect x="985.70" y="117.70" width="1.6" height="1.6" fill="#bfae8a"/><rect x="988.05" y="114.95" width="1.9" height="1.9" fill="#bfae8a"/><rect x="988.05" y="120.15" width="1.9" height="1.9" fill="#bfae8a"/><rect x="990.70" y="117.70" width="1.6" height="1.6" fill="#bfae8a"/><rect x="993.05" y="114.95" width="1.9" height="1.9" fill="#bfae8a"/><rect x="993.05" y="120.15" width="1.9" height="1.9" fill="#bfae8a"/><rect x="995.70" y="117.70" width="1.6" height="1.6" fill="#bfae8a"/><rect x="998.05" y="114.95" width="1.9" height="1.9" fill="#bfae8a"/><rect x="998.05" y="120.15" width="1.9" height="1.9" fill="#bfae8a"/><rect x="1000.70" y="117.70" width="1.6" height="1.6" fill="#bfae8a"/><rect x="1003.05" y="114.95" width="1.9" height="1.9" fill="#bfae8a"/><rect x="1003.05" y="120.15" width="1.9" height="1.9" fill="#bfae8a"/><rect x="1005.70" y="117.70" width="1.6" height="1.6" fill="#bfae8a"/><rect x="1008.05" y="114.95" width="1.9" height="1.9" fill="#bfae8a"/><rect x="1008.05" y="120.15" width="1.9" height="1.9" fill="#bfae8a"/><rect x="1010.70" y="117.70" width="1.6" height="1.6" fill="#bfae8a"/><rect x="1013.05" y="114.95" width="1.9" height="1.9" fill="#bfae8a"/><rect x="1013.05" y="120.15" width="1.9" height="1.9" fill="#bfae8a"/><rect x="1015.70" y="117.70" width="1.6" height="1.6" fill="#bfae8a"/><rect x="1018.05" y="114.95" width="1.9" height="1.9" fill="#bfae8a"/><rect x="1018.05" y="120.15" width="1.9" height="1.9" fill="#bfae8a"/><rect x="1020.70" y="117.70" width="1.6" height="1.6" fill="#bfae8a"/><rect x="1023.05" y="114.95" width="1.9" height="1.9" fill="#bfae8a"/><rect x="1023.05" y="120.15" width="1.9" height="1.9" fill="#bfae8a"/><rect x="1025.70" y="117.70" width="1.6" height="1.6" fill="#bfae8a"/><rect x="1028.05" y="114.95" width="1.9" height="1.9" fill="#bfae8a"/><rect x="1028.05" y="120.15" width="1.9" height="1.9" fill="#bfae8a"/><rect x="1030.70" y="117.70" width="1.6" height="1.6" fill="#bfae8a"/><rect x="1033.05" y="114.95" width="1.9" height="1.9" fill="#bfae8a"/><rect x="1033.05" y="120.15" width="1.9" height="1.9" fill="#bfae8a"/><rect x="1035.70" y="117.70" width="1.6" height="1.6" fill="#bfae8a"/><rect x="1038.05" y="114.95" width="1.9" height="1.9" fill="#bfae8a"/><rect x="1038.05" y="120.15" width="1.9" height="1.9" fill="#bfae8a"/><rect x="1040.70" y="117.70" width="1.6" height="1.6" fill="#bfae8a"/><rect x="1043.05" y="114.95" width="1.9" height="1.9" fill="#bfae8a"/><rect x="1043.05" y="120.15" width="1.9" height="1.9" fill="#bfae8a"/><rect x="1045.70" y="117.70" width="1.6" height="1.6" fill="#bfae8a"/><rect x="1048.05" y="114.95" width="1.9" height="1.9" fill="#bfae8a"/><rect x="1048.05" y="120.15" width="1.9" height="1.9" fill="#bfae8a"/><rect x="1050.70" y="117.70" width="1.6" height="1.6" fill="#bfae8a"/><rect x="1053.05" y="114.95" width="1.9" height="1.9" fill="#bfae8a"/><rect x="1053.05" y="120.15" width="1.9" height="1.9" fill="#bfae8a"/><rect x="1055.70" y="117.70" width="1.6" height="1.6" fill="#bfae8a"/><rect x="1058.05" y="114.95" width="1.9" height="1.9" fill="#bfae8a"/><rect x="1058.05" y="120.15" width="1.9" height="1.9" fill="#bfae8a"/><rect x="1060.70" y="117.70" width="1.6" height="1.6" fill="#bfae8a"/><rect x="1063.05" y="114.95" width="1.9" height="1.9" fill="#bfae8a"/><rect x="1063.05" y="120.15" width="1.9" height="1.9" fill="#bfae8a"/><rect x="1065.70" y="117.70" width="1.6" height="1.6" fill="#bfae8a"/><rect x="1068.05" y="114.95" width="1.9" height="1.9" fill="#bfae8a"/><rect x="1068.05" y="120.15" width="1.9" height="1.9" fill="#bfae8a"/><rect x="1070.70" y="117.70" width="1.6" height="1.6" fill="#bfae8a"/><rect x="1073.05" y="114.95" width="1.9" height="1.9" fill="#bfae8a"/><rect x="1073.05" y="120.15" width="1.9" height="1.9" fill="#bfae8a"/><rect x="1075.70" y="117.70" width="1.6" height="1.6" fill="#bfae8a"/><rect x="1078.05" y="114.95" width="1.9" height="1.9" fill="#bfae8a"/><rect x="1078.05" y="120.15" width="1.9" height="1.9" fill="#bfae8a"/><rect x="1080.70" y="117.70" width="1.6" height="1.6" fill="#bfae8a"/><rect x="1083.05" y="114.95" width="1.9" height="1.9" fill="#bfae8a"/><rect x="1083.05" y="120.15" width="1.9" height="1.9" fill="#bfae8a"/><rect x="1085.70" y="117.70" width="1.6" height="1.6" fill="#bfae8a"/><rect x="1088.05" y="114.95" width="1.9" height="1.9" fill="#bfae8a"/><rect x="1088.05" y="120.15" width="1.9" height="1.9" fill="#bfae8a"/><rect x="1090.70" y="117.70" width="1.6" height="1.6" fill="#bfae8a"/><rect x="1093.05" y="114.95" width="1.9" height="1.9" fill="#bfae8a"/><rect x="1093.05" y="120.15" width="1.9" height="1.9" fill="#bfae8a"/><rect x="1095.70" y="117.70" width="1.6" height="1.6" fill="#bfae8a"/><rect x="1098.05" y="114.95" width="1.9" height="1.9" fill="#bfae8a"/><rect x="1098.05" y="120.15" width="1.9" height="1.9" fill="#bfae8a"/><rect x="1100.70" y="117.70" width="1.6" height="1.6" fill="#bfae8a"/><rect x="1103.05" y="114.95" width="1.9" height="1.9" fill="#bfae8a"/><rect x="1103.05" y="120.15" width="1.9" height="1.9" fill="#bfae8a"/><rect x="1105.70" y="117.70" width="1.6" height="1.6" fill="#bfae8a"/><rect x="1108.05" y="114.95" width="1.9" height="1.9" fill="#bfae8a"/><rect x="1108.05" y="120.15" width="1.9" height="1.9" fill="#bfae8a"/><rect x="1110.70" y="117.70" width="1.6" height="1.6" fill="#bfae8a"/><rect x="1113.05" y="114.95" width="1.9" height="1.9" fill="#bfae8a"/><rect x="1113.05" y="120.15" width="1.9" height="1.9" fill="#bfae8a"/><rect x="1115.70" y="117.70" width="1.6" height="1.6" fill="#bfae8a"/><rect x="1118.05" y="114.95" width="1.9" height="1.9" fill="#bfae8a"/><rect x="1118.05" y="120.15" width="1.9" height="1.9" fill="#bfae8a"/><rect x="1120.70" y="117.70" width="1.6" height="1.6" fill="#bfae8a"/><rect x="1123.05" y="114.95" width="1.9" height="1.9" fill="#bfae8a"/><rect x="1123.05" y="120.15" width="1.9" height="1.9" fill="#bfae8a"/><rect x="1125.70" y="117.70" width="1.6" height="1.6" fill="#bfae8a"/><rect x="1128.05" y="114.95" width="1.9" height="1.9" fill="#bfae8a"/><rect x="1128.05" y="120.15" width="1.9" height="1.9" fill="#bfae8a"/><rect x="1130.70" y="117.70" width="1.6" height="1.6" fill="#bfae8a"/><rect x="1133.05" y="114.95" width="1.9" height="1.9" fill="#bfae8a"/><rect x="1133.05" y="120.15" width="1.9" height="1.9" fill="#bfae8a"/><rect x="1135.70" y="117.70" width="1.6" height="1.6" fill="#bfae8a"/><rect x="1138.05" y="114.95" width="1.9" height="1.9" fill="#bfae8a"/><rect x="1138.05" y="120.15" width="1.9" height="1.9" fill="#bfae8a"/><rect x="1140.70" y="117.70" width="1.6" height="1.6" fill="#bfae8a"/><rect x="1143.05" y="114.95" width="1.9" height="1.9" fill="#bfae8a"/><rect x="1143.05" y="120.15" width="1.9" height="1.9" fill="#bfae8a"/><rect x="1145.70" y="117.70" width="1.6" height="1.6" fill="#bfae8a"/><rect x="1148.05" y="114.95" width="1.9" height="1.9" fill="#bfae8a"/><rect x="1148.05" y="120.15" width="1.9" height="1.9" fill="#bfae8a"/><rect x="1150.70" y="117.70" width="1.6" height="1.6" fill="#bfae8a"/><rect x="1153.05" y="114.95" width="1.9" height="1.9" fill="#bfae8a"/><rect x="1153.05" y="120.15" width="1.9" height="1.9" fill="#bfae8a"/><rect x="1155.70" y="117.70" width="1.6" height="1.6" fill="#bfae8a"/><rect x="1158.05" y="114.95" width="1.9" height="1.9" fill="#bfae8a"/><rect x="1158.05" y="120.15" width="1.9" height="1.9" fill="#bfae8a"/><rect x="1160.70" y="117.70" width="1.6" height="1.6" fill="#bfae8a"/><rect x="1163.05" y="114.95" width="1.9" height="1.9" fill="#bfae8a"/><rect x="1163.05" y="120.15" width="1.9" height="1.9" fill="#bfae8a"/><rect x="1165.70" y="117.70" width="1.6" height="1.6" fill="#bfae8a"/><rect x="1168.05" y="114.95" width="1.9" height="1.9" fill="#bfae8a"/><rect x="1168.05" y="120.15" width="1.9" height="1.9" fill="#bfae8a"/><rect x="1170.70" y="117.70" width="1.6" height="1.6" fill="#bfae8a"/><rect x="1173.05" y="114.95" width="1.9" height="1.9" fill="#bfae8a"/><rect x="1173.05" y="120.15" width="1.9" height="1.9" fill="#bfae8a"/><rect x="1175.70" y="117.70" width="1.6" height="1.6" fill="#bfae8a"/><rect x="1178.05" y="114.95" width="1.9" height="1.9" fill="#bfae8a"/><rect x="1178.05" y="120.15" width="1.9" height="1.9" fill="#bfae8a"/><rect x="1180.70" y="117.70" width="1.6" height="1.6" fill="#bfae8a"/><rect x="1183.05" y="114.95" width="1.9" height="1.9" fill="#bfae8a"/><rect x="1183.05" y="120.15" width="1.9" height="1.9" fill="#bfae8a"/><rect x="1185.70" y="117.70" width="1.6" height="1.6" fill="#bfae8a"/><rect x="1188.05" y="114.95" width="1.9" height="1.9" fill="#bfae8a"/><rect x="1188.05" y="120.15" width="1.9" height="1.9" fill="#bfae8a"/><rect x="1190.70" y="117.70" width="1.6" height="1.6" fill="#bfae8a"/><rect x="1193.05" y="114.95" width="1.9" height="1.9" fill="#bfae8a"/><rect x="1193.05" y="120.15" width="1.9" height="1.9" fill="#bfae8a"/><rect x="1195.70" y="117.70" width="1.6" height="1.6" fill="#bfae8a"/><rect x="1198.05" y="114.95" width="1.9" height="1.9" fill="#bfae8a"/><rect x="1198.05" y="120.15" width="1.9" height="1.9" fill="#bfae8a"/><rect x="1200.70" y="117.70" width="1.6" height="1.6" fill="#bfae8a"/><rect x="1203.05" y="114.95" width="1.9" height="1.9" fill="#bfae8a"/><rect x="1203.05" y="120.15" width="1.9" height="1.9" fill="#bfae8a"/><rect x="1205.70" y="117.70" width="1.6" height="1.6" fill="#bfae8a"/><rect x="1208.05" y="114.95" width="1.9" height="1.9" fill="#bfae8a"/><rect x="1208.05" y="120.15" width="1.9" height="1.9" fill="#bfae8a"/><rect x="1210.70" y="117.70" width="1.6" height="1.6" fill="#bfae8a"/><rect x="1213.05" y="114.95" width="1.9" height="1.9" fill="#bfae8a"/><rect x="1213.05" y="120.15" width="1.9" height="1.9" fill="#bfae8a"/><rect x="1215.70" y="117.70" width="1.6" height="1.6" fill="#bfae8a"/><rect x="1218.05" y="114.95" width="1.9" height="1.9" fill="#bfae8a"/><rect x="1218.05" y="120.15" width="1.9" height="1.9" fill="#bfae8a"/><rect x="1220.70" y="117.70" width="1.6" height="1.6" fill="#bfae8a"/><rect x="1223.05" y="114.95" width="1.9" height="1.9" fill="#bfae8a"/><rect x="1223.05" y="120.15" width="1.9" height="1.9" fill="#bfae8a"/><rect x="1225.70" y="117.70" width="1.6" height="1.6" fill="#bfae8a"/><rect x="1228.05" y="114.95" width="1.9" height="1.9" fill="#bfae8a"/><rect x="1228.05" y="120.15" width="1.9" height="1.9" fill="#bfae8a"/><rect x="1230.70" y="117.70" width="1.6" height="1.6" fill="#bfae8a"/><rect x="1233.05" y="114.95" width="1.9" height="1.9" fill="#bfae8a"/><rect x="1233.05" y="120.15" width="1.9" height="1.9" fill="#bfae8a"/><rect x="1235.70" y="117.70" width="1.6" height="1.6" fill="#bfae8a"/><rect x="1238.05" y="114.95" width="1.9" height="1.9" fill="#bfae8a"/><rect x="1238.05" y="120.15" width="1.9" height="1.9" fill="#bfae8a"/><rect x="1240.70" y="117.70" width="1.6" height="1.6" fill="#bfae8a"/><rect x="1243.05" y="114.95" width="1.9" height="1.9" fill="#bfae8a"/><rect x="1243.05" y="120.15" width="1.9" height="1.9" fill="#bfae8a"/><rect x="1245.70" y="117.70" width="1.6" height="1.6" fill="#bfae8a"/><rect x="1248.05" y="114.95" width="1.9" height="1.9" fill="#bfae8a"/><rect x="1248.05" y="120.15" width="1.9" height="1.9" fill="#bfae8a"/><rect x="1250.70" y="117.70" width="1.6" height="1.6" fill="#bfae8a"/><rect x="1253.05" y="114.95" width="1.9" height="1.9" fill="#bfae8a"/><rect x="1253.05" y="120.15" width="1.9" height="1.9" fill="#bfae8a"/><rect x="1255.70" y="117.70" width="1.6" height="1.6" fill="#bfae8a"/><rect x="1258.05" y="114.95" width="1.9" height="1.9" fill="#bfae8a"/><rect x="1258.05" y="120.15" width="1.9" height="1.9" fill="#bfae8a"/><rect x="1260.70" y="117.70" width="1.6" height="1.6" fill="#bfae8a"/><rect x="1263.05" y="114.95" width="1.9" height="1.9" fill="#bfae8a"/><rect x="1263.05" y="120.15" width="1.9" height="1.9" fill="#bfae8a"/><rect x="1265.70" y="117.70" width="1.6" height="1.6" fill="#bfae8a"/><rect x="1268.05" y="114.95" width="1.9" height="1.9" fill="#bfae8a"/><rect x="1268.05" y="120.15" width="1.9" height="1.9" fill="#bfae8a"/><rect x="1270.70" y="117.70" width="1.6" height="1.6" fill="#bfae8a"/><rect x="1273.05" y="114.95" width="1.9" height="1.9" fill="#bfae8a"/><rect x="1273.05" y="120.15" width="1.9" height="1.9" fill="#bfae8a"/><rect x="1275.70" y="117.70" width="1.6" height="1.6" fill="#bfae8a"/><rect x="1278.05" y="114.95" width="1.9" height="1.9" fill="#bfae8a"/><rect x="1278.05" y="120.15" width="1.9" height="1.9" fill="#bfae8a"/><rect x="1280.70" y="117.70" width="1.6" height="1.6" fill="#bfae8a"/><rect x="1283.05" y="114.95" width="1.9" height="1.9" fill="#bfae8a"/><rect x="1283.05" y="120.15" width="1.9" height="1.9" fill="#bfae8a"/><rect x="1285.70" y="117.70" width="1.6" height="1.6" fill="#bfae8a"/><rect x="1288.05" y="114.95" width="1.9" height="1.9" fill="#bfae8a"/><rect x="1288.05" y="120.15" width="1.9" height="1.9" fill="#bfae8a"/><rect x="1290.70" y="117.70" width="1.6" height="1.6" fill="#bfae8a"/><rect x="1293.05" y="114.95" width="1.9" height="1.9" fill="#bfae8a"/><rect x="1293.05" y="120.15" width="1.9" height="1.9" fill="#bfae8a"/><rect x="1295.70" y="117.70" width="1.6" height="1.6" fill="#bfae8a"/><rect x="1298.05" y="114.95" width="1.9" height="1.9" fill="#bfae8a"/><rect x="1298.05" y="120.15" width="1.9" height="1.9" fill="#bfae8a"/><rect x="1300.70" y="117.70" width="1.6" height="1.6" fill="#bfae8a"/><rect x="1303.05" y="114.95" width="1.9" height="1.9" fill="#bfae8a"/><rect x="1303.05" y="120.15" width="1.9" height="1.9" fill="#bfae8a"/><rect x="1305.70" y="117.70" width="1.6" height="1.6" fill="#bfae8a"/><rect x="1308.05" y="114.95" width="1.9" height="1.9" fill="#bfae8a"/><rect x="1308.05" y="120.15" width="1.9" height="1.9" fill="#bfae8a"/><rect x="1310.70" y="117.70" width="1.6" height="1.6" fill="#bfae8a"/><rect x="1313.05" y="114.95" width="1.9" height="1.9" fill="#bfae8a"/><rect x="1313.05" y="120.15" width="1.9" height="1.9" fill="#bfae8a"/><rect x="1315.70" y="117.70" width="1.6" height="1.6" fill="#bfae8a"/><rect x="1318.05" y="114.95" width="1.9" height="1.9" fill="#bfae8a"/><rect x="1318.05" y="120.15" width="1.9" height="1.9" fill="#bfae8a"/><rect x="1320.70" y="117.70" width="1.6" height="1.6" fill="#bfae8a"/><rect x="1323.05" y="114.95" width="1.9" height="1.9" fill="#bfae8a"/><rect x="1323.05" y="120.15" width="1.9" height="1.9" fill="#bfae8a"/><rect x="1325.70" y="117.70" width="1.6" height="1.6" fill="#bfae8a"/><rect x="1328.05" y="114.95" width="1.9" height="1.9" fill="#bfae8a"/><rect x="1328.05" y="120.15" width="1.9" height="1.9" fill="#bfae8a"/><rect x="1330.70" y="117.70" width="1.6" height="1.6" fill="#bfae8a"/><rect x="1333.05" y="114.95" width="1.9" height="1.9" fill="#bfae8a"/><rect x="1333.05" y="120.15" width="1.9" height="1.9" fill="#bfae8a"/></svg>
<svg style="position:absolute;left:0;top:0" width="1600" height="922"><rect x="1342.05" y="114.95" width="1.9" height="1.9" fill="#bfae8a"/><rect x="1342.05" y="120.15" width="1.9" height="1.9" fill="#bfae8a"/><rect x="1344.70" y="117.70" width="1.6" height="1.6" fill="#bfae8a"/><rect x="1347.05" y="114.95" width="1.9" height="1.9" fill="#bfae8a"/><rect x="1347.05" y="120.15" width="1.9" height="1.9" fill="#bfae8a"/><rect x="1349.70" y="117.70" width="1.6" height="1.6" fill="#bfae8a"/><rect x="1352.05" y="114.95" width="1.9" height="1.9" fill="#bfae8a"/><rect x="1352.05" y="120.15" width="1.9" height="1.9" fill="#bfae8a"/><rect x="1354.70" y="117.70" width="1.6" height="1.6" fill="#bfae8a"/><rect x="1357.05" y="114.95" width="1.9" height="1.9" fill="#bfae8a"/><rect x="1357.05" y="120.15" width="1.9" height="1.9" fill="#bfae8a"/><rect x="1359.70" y="117.70" width="1.6" height="1.6" fill="#bfae8a"/><rect x="1362.05" y="114.95" width="1.9" height="1.9" fill="#bfae8a"/><rect x="1362.05" y="120.15" width="1.9" height="1.9" fill="#bfae8a"/><rect x="1364.70" y="117.70" width="1.6" height="1.6" fill="#bfae8a"/><rect x="1367.05" y="114.95" width="1.9" height="1.9" fill="#bfae8a"/><rect x="1367.05" y="120.15" width="1.9" height="1.9" fill="#bfae8a"/><rect x="1369.70" y="117.70" width="1.6" height="1.6" fill="#bfae8a"/><rect x="1372.05" y="114.95" width="1.9" height="1.9" fill="#bfae8a"/><rect x="1372.05" y="120.15" width="1.9" height="1.9" fill="#bfae8a"/><rect x="1374.70" y="117.70" width="1.6" height="1.6" fill="#bfae8a"/><rect x="1377.05" y="114.95" width="1.9" height="1.9" fill="#bfae8a"/><rect x="1377.05" y="120.15" width="1.9" height="1.9" fill="#bfae8a"/><rect x="1379.70" y="117.70" width="1.6" height="1.6" fill="#bfae8a"/><rect x="1382.05" y="114.95" width="1.9" height="1.9" fill="#bfae8a"/><rect x="1382.05" y="120.15" width="1.9" height="1.9" fill="#bfae8a"/><rect x="1384.70" y="117.70" width="1.6" height="1.6" fill="#bfae8a"/><rect x="1387.05" y="114.95" width="1.9" height="1.9" fill="#bfae8a"/><rect x="1387.05" y="120.15" width="1.9" height="1.9" fill="#bfae8a"/><rect x="1389.70" y="117.70" width="1.6" height="1.6" fill="#bfae8a"/><rect x="1392.05" y="114.95" width="1.9" height="1.9" fill="#bfae8a"/><rect x="1392.05" y="120.15" width="1.9" height="1.9" fill="#bfae8a"/><rect x="1394.70" y="117.70" width="1.6" height="1.6" fill="#bfae8a"/><rect x="1397.05" y="114.95" width="1.9" height="1.9" fill="#bfae8a"/><rect x="1397.05" y="120.15" width="1.9" height="1.9" fill="#bfae8a"/><rect x="1399.70" y="117.70" width="1.6" height="1.6" fill="#bfae8a"/><rect x="1402.05" y="114.95" width="1.9" height="1.9" fill="#bfae8a"/><rect x="1402.05" y="120.15" width="1.9" height="1.9" fill="#bfae8a"/><rect x="1404.70" y="117.70" width="1.6" height="1.6" fill="#bfae8a"/><rect x="1407.05" y="114.95" width="1.9" height="1.9" fill="#bfae8a"/><rect x="1407.05" y="120.15" width="1.9" height="1.9" fill="#bfae8a"/><rect x="1409.70" y="117.70" width="1.6" height="1.6" fill="#bfae8a"/><rect x="1412.05" y="114.95" width="1.9" height="1.9" fill="#bfae8a"/><rect x="1412.05" y="120.15" width="1.9" height="1.9" fill="#bfae8a"/><rect x="1414.70" y="117.70" width="1.6" height="1.6" fill="#bfae8a"/><rect x="1417.05" y="114.95" width="1.9" height="1.9" fill="#bfae8a"/><rect x="1417.05" y="120.15" width="1.9" height="1.9" fill="#bfae8a"/><rect x="1419.70" y="117.70" width="1.6" height="1.6" fill="#bfae8a"/><rect x="1422.05" y="114.95" width="1.9" height="1.9" fill="#bfae8a"/><rect x="1422.05" y="120.15" width="1.9" height="1.9" fill="#bfae8a"/><rect x="1424.70" y="117.70" width="1.6" height="1.6" fill="#bfae8a"/><rect x="1427.05" y="114.95" width="1.9" height="1.9" fill="#bfae8a"/><rect x="1427.05" y="120.15" width="1.9" height="1.9" fill="#bfae8a"/><rect x="1429.70" y="117.70" width="1.6" height="1.6" fill="#bfae8a"/><rect x="1432.05" y="114.95" width="1.9" height="1.9" fill="#bfae8a"/><rect x="1432.05" y="120.15" width="1.9" height="1.9" fill="#bfae8a"/><rect x="1434.70" y="117.70" width="1.6" height="1.6" fill="#bfae8a"/><rect x="1437.05" y="114.95" width="1.9" height="1.9" fill="#bfae8a"/><rect x="1437.05" y="120.15" width="1.9" height="1.9" fill="#bfae8a"/><rect x="1439.70" y="117.70" width="1.6" height="1.6" fill="#bfae8a"/><rect x="1442.05" y="114.95" width="1.9" height="1.9" fill="#bfae8a"/><rect x="1442.05" y="120.15" width="1.9" height="1.9" fill="#bfae8a"/><rect x="1444.70" y="117.70" width="1.6" height="1.6" fill="#bfae8a"/><rect x="1447.05" y="114.95" width="1.9" height="1.9" fill="#bfae8a"/><rect x="1447.05" y="120.15" width="1.9" height="1.9" fill="#bfae8a"/><rect x="1449.70" y="117.70" width="1.6" height="1.6" fill="#bfae8a"/><rect x="1452.05" y="114.95" width="1.9" height="1.9" fill="#bfae8a"/><rect x="1452.05" y="120.15" width="1.9" height="1.9" fill="#bfae8a"/><rect x="1454.70" y="117.70" width="1.6" height="1.6" fill="#bfae8a"/><rect x="1457.05" y="114.95" width="1.9" height="1.9" fill="#bfae8a"/><rect x="1457.05" y="120.15" width="1.9" height="1.9" fill="#bfae8a"/><rect x="1459.70" y="117.70" width="1.6" height="1.6" fill="#bfae8a"/><rect x="1462.05" y="114.95" width="1.9" height="1.9" fill="#bfae8a"/><rect x="1462.05" y="120.15" width="1.9" height="1.9" fill="#bfae8a"/><rect x="1464.70" y="117.70" width="1.6" height="1.6" fill="#bfae8a"/><rect x="1467.05" y="114.95" width="1.9" height="1.9" fill="#bfae8a"/><rect x="1467.05" y="120.15" width="1.9" height="1.9" fill="#bfae8a"/><rect x="1469.70" y="117.70" width="1.6" height="1.6" fill="#bfae8a"/><rect x="1472.05" y="114.95" width="1.9" height="1.9" fill="#bfae8a"/><rect x="1472.05" y="120.15" width="1.9" height="1.9" fill="#bfae8a"/><rect x="1474.70" y="117.70" width="1.6" height="1.6" fill="#bfae8a"/><rect x="1477.05" y="114.95" width="1.9" height="1.9" fill="#bfae8a"/><rect x="1477.05" y="120.15" width="1.9" height="1.9" fill="#bfae8a"/><rect x="1479.70" y="117.70" width="1.6" height="1.6" fill="#bfae8a"/><rect x="1482.05" y="114.95" width="1.9" height="1.9" fill="#bfae8a"/><rect x="1482.05" y="120.15" width="1.9" height="1.9" fill="#bfae8a"/><rect x="1484.70" y="117.70" width="1.6" height="1.6" fill="#bfae8a"/><rect x="1487.05" y="114.95" width="1.9" height="1.9" fill="#bfae8a"/><rect x="1487.05" y="120.15" width="1.9" height="1.9" fill="#bfae8a"/><rect x="1489.70" y="117.70" width="1.6" height="1.6" fill="#bfae8a"/><rect x="1492.05" y="114.95" width="1.9" height="1.9" fill="#bfae8a"/><rect x="1492.05" y="120.15" width="1.9" height="1.9" fill="#bfae8a"/><rect x="1494.70" y="117.70" width="1.6" height="1.6" fill="#bfae8a"/><rect x="1497.05" y="114.95" width="1.9" height="1.9" fill="#bfae8a"/><rect x="1497.05" y="120.15" width="1.9" height="1.9" fill="#bfae8a"/><rect x="1499.70" y="117.70" width="1.6" height="1.6" fill="#bfae8a"/><rect x="1502.05" y="114.95" width="1.9" height="1.9" fill="#bfae8a"/><rect x="1502.05" y="120.15" width="1.9" height="1.9" fill="#bfae8a"/><rect x="1504.70" y="117.70" width="1.6" height="1.6" fill="#bfae8a"/><rect x="1507.05" y="114.95" width="1.9" height="1.9" fill="#bfae8a"/><rect x="1507.05" y="120.15" width="1.9" height="1.9" fill="#bfae8a"/><rect x="1509.70" y="117.70" width="1.6" height="1.6" fill="#bfae8a"/><rect x="1512.05" y="114.95" width="1.9" height="1.9" fill="#bfae8a"/><rect x="1512.05" y="120.15" width="1.9" height="1.9" fill="#bfae8a"/><rect x="1514.70" y="117.70" width="1.6" height="1.6" fill="#bfae8a"/><rect x="1517.05" y="114.95" width="1.9" height="1.9" fill="#bfae8a"/><rect x="1517.05" y="120.15" width="1.9" height="1.9" fill="#bfae8a"/><rect x="1519.70" y="117.70" width="1.6" height="1.6" fill="#bfae8a"/><rect x="1522.05" y="114.95" width="1.9" height="1.9" fill="#bfae8a"/><rect x="1522.05" y="120.15" width="1.9" height="1.9" fill="#bfae8a"/><rect x="1524.70" y="117.70" width="1.6" height="1.6" fill="#bfae8a"/><rect x="1527.05" y="114.95" width="1.9" height="1.9" fill="#bfae8a"/><rect x="1527.05" y="120.15" width="1.9" height="1.9" fill="#bfae8a"/><rect x="1529.70" y="117.70" width="1.6" height="1.6" fill="#bfae8a"/><rect x="1532.05" y="114.95" width="1.9" height="1.9" fill="#bfae8a"/><rect x="1532.05" y="120.15" width="1.9" height="1.9" fill="#bfae8a"/><rect x="1534.70" y="117.70" width="1.6" height="1.6" fill="#bfae8a"/><rect x="1537.05" y="114.95" width="1.9" height="1.9" fill="#bfae8a"/><rect x="1537.05" y="120.15" width="1.9" height="1.9" fill="#bfae8a"/><rect x="1539.70" y="117.70" width="1.6" height="1.6" fill="#bfae8a"/><rect x="1542.05" y="114.95" width="1.9" height="1.9" fill="#bfae8a"/><rect x="1542.05" y="120.15" width="1.9" height="1.9" fill="#bfae8a"/><rect x="1544.70" y="117.70" width="1.6" height="1.6" fill="#bfae8a"/><rect x="1547.05" y="114.95" width="1.9" height="1.9" fill="#bfae8a"/><rect x="1547.05" y="120.15" width="1.9" height="1.9" fill="#bfae8a"/><rect x="1549.70" y="117.70" width="1.6" height="1.6" fill="#bfae8a"/><rect x="1552.05" y="114.95" width="1.9" height="1.9" fill="#bfae8a"/><rect x="1552.05" y="120.15" width="1.9" height="1.9" fill="#bfae8a"/><rect x="1554.70" y="117.70" width="1.6" height="1.6" fill="#bfae8a"/><rect x="1557.05" y="114.95" width="1.9" height="1.9" fill="#bfae8a"/><rect x="1557.05" y="120.15" width="1.9" height="1.9" fill="#bfae8a"/><rect x="1559.70" y="117.70" width="1.6" height="1.6" fill="#bfae8a"/><rect x="1562.05" y="114.95" width="1.9" height="1.9" fill="#bfae8a"/><rect x="1562.05" y="120.15" width="1.9" height="1.9" fill="#bfae8a"/><rect x="1564.70" y="117.70" width="1.6" height="1.6" fill="#bfae8a"/><rect x="1567.05" y="114.95" width="1.9" height="1.9" fill="#bfae8a"/><rect x="1567.05" y="120.15" width="1.9" height="1.9" fill="#bfae8a"/><rect x="1569.70" y="117.70" width="1.6" height="1.6" fill="#bfae8a"/><rect x="1572.05" y="114.95" width="1.9" height="1.9" fill="#bfae8a"/><rect x="1572.05" y="120.15" width="1.9" height="1.9" fill="#bfae8a"/><rect x="1574.70" y="117.70" width="1.6" height="1.6" fill="#bfae8a"/><rect x="1577.05" y="114.95" width="1.9" height="1.9" fill="#bfae8a"/><rect x="1577.05" y="120.15" width="1.9" height="1.9" fill="#bfae8a"/><rect x="1579.70" y="117.70" width="1.6" height="1.6" fill="#bfae8a"/><rect x="1582.05" y="114.95" width="1.9" height="1.9" fill="#bfae8a"/><rect x="1582.05" y="120.15" width="1.9" height="1.9" fill="#bfae8a"/><rect x="1584.70" y="117.70" width="1.6" height="1.6" fill="#bfae8a"/><rect x="1587.05" y="114.95" width="1.9" height="1.9" fill="#bfae8a"/><rect x="1587.05" y="120.15" width="1.9" height="1.9" fill="#bfae8a"/><rect x="1589.70" y="117.70" width="1.6" height="1.6" fill="#bfae8a"/></svg>
<svg style="position:absolute;left:0;top:0" width="1600" height="100"><defs><linearGradient id="docg" x1="0" y1="0" x2="1" y2="1"><stop offset="0" stop-color="#d4d6d6"/><stop offset="1" stop-color="#b4b6b6"/></linearGradient><radialGradient id="star"><stop offset="0" stop-color="#fffbe0"/><stop offset="0.5" stop-color="#f8e050"/><stop offset="1" stop-color="#e8c020" stop-opacity="0.2"/></radialGradient><linearGradient id="fold" x1="0" y1="0" x2="0" y2="1"><stop offset="0" stop-color="#f8e27a"/><stop offset="1" stop-color="#d9a814"/></linearGradient></defs><rect x="1.5" y="65.0" width="1.2" height="1.2" fill="#7d8799"/><rect x="1.5" y="68.2" width="1.2" height="1.2" fill="#7d8799"/><rect x="1.5" y="71.4" width="1.2" height="1.2" fill="#7d8799"/><rect x="1.5" y="74.6" width="1.2" height="1.2" fill="#7d8799"/><rect x="1.5" y="77.8" width="1.2" height="1.2" fill="#7d8799"/><rect x="1.5" y="81.0" width="1.2" height="1.2" fill="#7d8799"/><rect x="18" y="68.5" width="15.5" height="18.5" rx="1" fill="url(#docg)" stroke="#8c8e8e" stroke-width="1.2"/><rect x="19.5" y="82.8" width="12" height="2" fill="#fafafa"/><rect x="31.5" y="69.2" width="4" height="4.5" fill="#3d86e8"/><rect x="33" y="74" width="2.6" height="12" fill="#f4f4f4"/><circle cx="19.4" cy="70.5" r="4.6" fill="url(#star)"/><path d="M19.4,65.8 L19.4,75.2 M14.7,70.5 L24.1,70.5 M16,67.1 L22.8,73.9 M22.8,67.1 L16,73.9" stroke="#f0cc20" stroke-width="1"/><rect x="54" y="68.5" width="10" height="12" fill="url(#docg)" stroke="#8c8e8e" stroke-width="1"/><rect x="64" y="69.5" width="3.5" height="4" fill="#3d86e8"/><path d="M50.5,73 L54,71.5 L55.5,79 L69.5,76 L67,86 Q61,88.5 52.5,88 Z" fill="url(#fold)" stroke="#c89a10" stroke-width="0.8"/><path d="M55,80 L68,77.5 L66.5,81 L54.5,83 Z" fill="#ece8d0" opacity="0.8"/><rect x="90.5" y="68.5" width="13" height="13.5" fill="url(#docg)" stroke="#8c8e8e" stroke-width="1"/><rect x="100" y="69.5" width="3.5" height="4" fill="#3d86e8"/><path d="M83,73 L97.5,73 L97.5,87.5 L83,87.5 Z" fill="#1f5fb8"/><rect x="86" y="73.5" width="8.5" height="6.5" fill="#e4e6e8"/><rect x="87" y="82.5" width="5" height="5" fill="#d0dff4"/><rect x="115.8" y="69.0" width="1.1" height="1.2" fill="#6f7a8d"/><rect x="115.8" y="72.2" width="1.1" height="1.2" fill="#6f7a8d"/><rect x="115.8" y="75.4" width="1.1" height="1.2" fill="#6f7a8d"/><rect x="115.8" y="78.6" width="1.1" height="1.2" fill="#6f7a8d"/><rect x="115.8" y="81.8" width="1.1" height="1.2" fill="#6f7a8d"/><rect x="115.8" y="85.0" width="1.1" height="1.2" fill="#6f7a8d"/><rect x="191" y="69.0" width="1.1" height="1.2" fill="#6f7a8d"/><rect x="191" y="72.2" width="1.1" height="1.2" fill="#6f7a8d"/><rect x="191" y="75.4" width="1.1" height="1.2" fill="#6f7a8d"/><rect x="191" y="78.6" width="1.1" height="1.2" fill="#6f7a8d"/><rect x="191" y="81.8" width="1.1" height="1.2" fill="#6f7a8d"/><rect x="191" y="85.0" width="1.1" height="1.2" fill="#6f7a8d"/><rect x="266" y="69.0" width="1.1" height="1.2" fill="#6f7a8d"/><rect x="266" y="72.2" width="1.1" height="1.2" fill="#6f7a8d"/><rect x="266" y="75.4" width="1.1" height="1.2" fill="#6f7a8d"/><rect x="266" y="78.6" width="1.1" height="1.2" fill="#6f7a8d"/><rect x="266" y="81.8" width="1.1" height="1.2" fill="#6f7a8d"/><rect x="266" y="85.0" width="1.1" height="1.2" fill="#6f7a8d"/><path d="M131,77.5 Q136,70.5 144.5,76.5" fill="none" stroke="#4a8bd4" stroke-width="3"/><path d="M126.5,72.5 L127.5,80 L134.5,79.5 Z" fill="#4a8bd4"/><path d="M174,77.5 Q169,70.5 160.5,76.5" fill="none" stroke="#4a8bd4" stroke-width="3"/><path d="M178.5,72.5 L177.5,80 L170.5,79.5 Z" fill="#4a8bd4"/><rect x="128" y="88" width="15" height="1" fill="#aab4c4"/><rect x="161" y="88" width="15" height="1" fill="#aab4c4"/><rect x="206" y="72.7" width="10.7" height="10.7" fill="#e8e8e8" stroke="#333" stroke-width="1"/><path d="M216.7,73.5 L216.7,83.4 L207,83.4 Z" fill="#555"/><path d="M209,82 h7 M211,79 h6 M213,76.5 h3.5 M211,76 v7 M214,74 v9" stroke="#eee" stroke-width="0.8"/><path d="M203.8,86 L218,71.3" stroke="#111" stroke-width="1.3"/><rect x="240" y="73.4" width="10.5" height="10.5" rx="1.5" fill="#fff" stroke="#333" stroke-width="1.3"/><path d="M242.8,73.5 v10.4 M245.3,73.5 v10.4 M247.8,73.5 v10.4 M240,76.2 h10.5 M240,78.7 h10.5 M240,81.2 h10.5" stroke="#333" stroke-width="0.9"/><path d="M278.5,68.5 L293,68.5 L293,82 L288.5,87 L278.5,87 Z" fill="#f7f7f7" stroke="#9a9a9a" stroke-width="1"/><rect x="283.7" y="68.5" width="9.5" height="4.3" fill="#4a8ee8"/><path d="M288.5,87 L289,82.5 L293,82" fill="#ddd" stroke="#999" stroke-width="0.8"/><circle cx="279.3" cy="70.5" r="4.5" fill="url(#star)"/><path d="M279.3,66 L279.3,75 M274.8,70.5 L283.8,70.5 M276.1,67.3 L282.5,73.7 M282.5,67.3 L276.1,73.7" stroke="#f0cc20" stroke-width="1"/><rect x="1386" y="64.5" width="124" height="24" fill="#fff" stroke="#d8dde6" stroke-width="0.8"/><path d="M1518.5,72 L1523,70 L1525,72 L1536,74 L1535,84 Q1530,88 1520,87.5 Z" fill="url(#fold)" stroke="#c89a10" stroke-width="0.8"/><circle cx="1529.3" cy="73.8" r="4.6" fill="#f4f0d8" fill-opacity="0.8" stroke="#555" stroke-width="1.3"/><path d="M1532.5,77.2 L1538.5,82.5" stroke="#444" stroke-width="1.8"/><rect x="1548.2" y="67.6" width="23" height="20.5" fill="#bdc8d9" stroke="#4656d0" stroke-width="1.4"/><rect x="1548.9" y="68.3" width="6.2" height="19.1" fill="#3d6ef2"/><rect x="1575.8" y="67.6" width="25" height="20.5" fill="#bdc8d9" stroke="#565656" stroke-width="1.4"/><rect x="1591.6" y="68.3" width="8.4" height="19.1" fill="#4e4e4e"/></svg>
<svg style="position:absolute;left:0;top:0" width="1600" height="922"><rect x="266.6" y="135.9" width="36.6" height="34.2" fill="none" stroke="#4a9af8" stroke-width="1.6"/><rect x="267" y="177.7" width="35.6" height="2" fill="#eef0f4"/><rect x="267" y="225" width="35.6" height="2" fill="#eef0f4"/><rect x="267" y="272.7" width="35.6" height="2" fill="#eef0f4"/><rect x="267" y="400.8" width="35.6" height="2" fill="#eef0f4"/><rect x="267" y="528.4" width="35.6" height="2" fill="#eef0f4"/><rect x="267" y="737" width="35.6" height="2" fill="#eef0f4"/><path d="M280.5,144.3 L280.5,159 L284,155.8 L287,162 L289.5,160.8 L286.8,154.8 L291.2,154.5 Z" fill="#f2f2f2" stroke="#444" stroke-width="1.1" stroke-linejoin="round"/><path d="M282,208.5 L278,201.8 Q275.3,198.2 277,197.2 Q278.6,196.5 280.6,199.5 L280.5,193.5 Q280.5,191.5 282.2,191.5 Q283.9,191.5 283.9,193.5 L283.9,197 L284.2,192.3 Q284.3,190.5 286,190.5 Q287.7,190.5 287.7,192.3 L287.7,197 L288.3,193 Q288.4,191.3 290,191.3 Q291.6,191.5 291.5,193.2 L291.2,198.2 L292.3,195.6 Q292.9,194.1 294,194.6 Q295,195.1 294.6,196.9 L292.6,203.5 Q291.6,206.5 290.2,208.5 Z" fill="url(#handg)" stroke="#3a3a3a" stroke-width="1.2" stroke-linejoin="round"/><defs><linearGradient id="handg" x1="0" y1="0" x2="1" y2="1"><stop offset="0" stop-color="#ffffff"/><stop offset="1" stop-color="#c8c8c8"/></linearGradient></defs><path d="M276.8,251.5 L285.5,243 L293.5,243 L293.5,246.8 L285,254.8 L276.8,254.8 Z" fill="#f4f4f4" stroke="#333" stroke-width="1.2" stroke-linejoin="round"/><path d="M276.8,251.5 L285,251.5 L293.5,243 M285,251.5 L285,254.8" fill="none" stroke="#333" stroke-width="1"/><path d="M276.6,290 L284,290 L285.5,288.6 L294,288.6 L294,303.5 L276.6,303.5 Z" fill="#e8e8e8" stroke="#333" stroke-width="1.3"/><rect x="277" y="301.5" width="17" height="2" fill="#333"/><path d="M280,295.5 L280,300 L283,300" fill="none" stroke="#222" stroke-width="1"/><path d="M277,329 L292,329 L292,339 L288.5,342.8 L277,342.8 Z" fill="#eeeeee" stroke="#333" stroke-width="1.2"/><path d="M279.5,337 L279.5,331.5 L283,337 L283,331.5" fill="none" stroke="#111" stroke-width="1.1"/><path d="M288.5,342.8 L289,339.2 L292,339" fill="#bbb" stroke="#555" stroke-width="0.8"/><rect x="277" y="368.5" width="15" height="14.5" fill="#eeeeee" stroke="#333" stroke-width="1.3"/><path d="M279.5,380 Q279,372 284.5,371 Q290.5,372 289.5,380 Z" fill="#222"/><rect x="284" y="379" width="1.2" height="3" fill="#222"/><rect x="276.8" y="416.8" width="15.4" height="13.8" fill="#f0f0f0" stroke="#333" stroke-width="1.4"/><path d="M277,420 h15 M277,423.3 h15 M277,426.6 h15 M281,419 v11.5 M284.5,419 v11.5 M288,419 v11.5" stroke="#555" stroke-width="0.9"/><rect x="275.8" y="456.3" width="12" height="10.5" fill="#f0f0f0" stroke="#333" stroke-width="1.2"/><path d="M276,459 h11.5 M276,462 h11.5 M279.5,458 v8.5 M283,458 v8.5" stroke="#666" stroke-width="0.8"/><rect x="281.5" y="462" width="12.3" height="10.8" fill="#f0f0f0" stroke="#333" stroke-width="1.2"/><path d="M282,465 h11.5 M282,468 h11.5 M285.5,464 v8.5 M289,464 v8.5" stroke="#666" stroke-width="0.8"/><rect x="274" y="493.5" width="14" height="13" fill="#e8e8e8" stroke="#333" stroke-width="1.2"/><rect x="277" y="496.8" width="14" height="13" fill="#e8e8e8" stroke="#333" stroke-width="1.2"/><rect x="280.5" y="500" width="14.3" height="15" fill="#f0f0f0" stroke="#333" stroke-width="1.3"/><path d="M283,504 h3 v3 h-3 z M289,504 h3 v3 h-3 z M286,505.5 h3 M285.5,508.5 L287.5,511" fill="none" stroke="#333" stroke-width="0.9"/><path d="M271.5,548.3 L297.5,548.3" stroke="#3a3a3a" stroke-width="1.6" stroke-dasharray="5 1.8"/><path d="M271.5,588.4 L297.5,588.4" stroke="#3a3a3a" stroke-width="1.6" stroke-dasharray="5 1.8"/><path d="M298,582.9 Q292,587.4 289.5,588.4 Q292,589.4 298,593.9" fill="none" stroke="#333" stroke-width="1.2"/><path d="M271.5,628.5 L297.5,628.5" stroke="#3a3a3a" stroke-width="1.6" /><path d="M271.5,669 L297.5,669" stroke="#3a3a3a" stroke-width="1.6" /><path d="M298,663.5 Q292,668 289.5,669 Q292,670 298,674.5" fill="none" stroke="#333" stroke-width="1.2"/><path d="M271.5,710 L297.5,710" stroke="#3a3a3a" stroke-width="1.6" /><path d="M298,704.5 Q292,709 289.5,710 Q292,711 298,715.5" fill="none" stroke="#333" stroke-width="1.2"/><path d="M271,704.5 Q277,709 279.5,710 Q277,711 271,715.5" fill="none" stroke="#333" stroke-width="1.2"/><path d="M271.5,756.5 L297.5,756.5" stroke="#3a3a3a" stroke-width="1.6" /><path d="M298,751.0 Q292,755.5 289.5,756.5 Q292,757.5 298,762.0" fill="none" stroke="#333" stroke-width="1.2"/><path d="M270.5,773.5 L273,769.0 L278,764.5 L280.5,767.0 L276,771.5 Z" fill="#222"/></svg>
<div style="position:absolute;left:283px;top:555.39px;white-space:pre;font:bold 11px/11px 'Liberation Sans', sans-serif;color:#1a1a1a;">1:1</div>
<div style="position:absolute;left:283px;top:595.19px;white-space:pre;font:normal 11px/11px 'Liberation Sans', sans-serif;color:#1a1a1a;">1:n</div>
<div style="position:absolute;left:283px;top:635.69px;white-space:pre;font:bold 11px/11px 'Liberation Sans', sans-serif;color:#1a1a1a;">1:1</div>
<div style="position:absolute;left:283px;top:676.29px;white-space:pre;font:normal 11px/11px 'Liberation Sans', sans-serif;color:#1a1a1a;">1:n</div>
<div style="position:absolute;left:278px;top:716.49px;white-space:pre;font:normal 11px/11px 'Liberation Sans', sans-serif;color:#1a1a1a;">n:m</div>
<div style="position:absolute;left:283px;top:763.69px;white-space:pre;font:normal 11px/11px 'Liberation Sans', sans-serif;color:#1a1a1a;">1:n</div>
<svg style="position:absolute;left:0;top:0" width="1600" height="922"><defs><linearGradient id="dbg" x1="0" y1="0" x2="1" y2="0"><stop offset="0" stop-color="#f8e070"/><stop offset="0.5" stop-color="#fff6c0"/><stop offset="1" stop-color="#e0b830"/></linearGradient><linearGradient id="tblg" x1="0" y1="0" x2="0" y2="1"><stop offset="0" stop-color="#eaf0ff"/><stop offset="1" stop-color="#a8bce8"/></linearGradient></defs><path d="M14,434 L25.2,434 L19.6,443.4 Z" fill="#3d4f6e"/><path d="M14,529 L23.4,534.8 L14,540.6 Z" fill="#3d4f6e"/><path d="M31.5,431.8 L31.5,443.8 Q39,448.3 46.5,443.8 L46.5,431.8 Z" fill="url(#dbg)" stroke="#c8a020" stroke-width="0.9"/><ellipse cx="39" cy="431.8" rx="7.5" ry="2.8" fill="#fff4b0" stroke="#c8a020" stroke-width="0.9"/><path d="M31.5,436.3 Q39,439.8 46.5,436.3 M31.5,440.3 Q39,443.8 46.5,440.3" fill="none" stroke="#c8a020" stroke-width="0.9"/><path d="M31.5,527.5 L31.5,539.5 Q39,544.0 46.5,539.5 L46.5,527.5 Z" fill="url(#dbg)" stroke="#c8a020" stroke-width="0.9"/><ellipse cx="39" cy="527.5" rx="7.5" ry="2.8" fill="#fff4b0" stroke="#c8a020" stroke-width="0.9"/><path d="M31.5,532.0 Q39,535.5 46.5,532.0 M31.5,536.0 Q39,539.5 46.5,536.0" fill="none" stroke="#c8a020" stroke-width="0.9"/><rect x="59" y="454" width="12.5" height="11" fill="url(#tblg)" stroke="#6a86d0" stroke-width="0.9"/><rect x="59" y="454" width="12.5" height="2" fill="#3048d8"/><rect x="53.5" y="459" width="12.5" height="12" fill="url(#tblg)" stroke="#6a86d0" stroke-width="0.9"/><rect x="53.5" y="459" width="12.5" height="2" fill="#3048d8"/><path d="M57,462 v8 M60,462 v8 M63,462 v8" stroke="#8aa0e0" stroke-width="0.8"/><rect x="59" y="478" width="12.5" height="11" fill="url(#tblg)" stroke="#6a86d0" stroke-width="0.9"/><rect x="59" y="478" width="12.5" height="2" fill="#3048d8"/><rect x="53.5" y="483" width="12.5" height="12" fill="url(#tblg)" stroke="#6a86d0" stroke-width="0.9"/><rect x="53.5" y="483" width="12.5" height="2" fill="#3048d8"/><path d="M57,486 v8 M60,486 v8 M63,486 v8" stroke="#8aa0e0" stroke-width="0.8"/><rect x="59" y="502" width="12.5" height="11" fill="url(#tblg)" stroke="#6a86d0" stroke-width="0.9"/><rect x="59" y="502" width="12.5" height="2" fill="#3048d8"/><rect x="53.5" y="507" width="12.5" height="12" fill="url(#tblg)" stroke="#6a86d0" stroke-width="0.9"/><rect x="53.5" y="507" width="12.5" height="2" fill="#3048d8"/><path d="M57,510 v8 M60,510 v8 M63,510 v8" stroke="#8aa0e0" stroke-width="0.8"/></svg>
<svg style="position:absolute;left:0;top:0" width="1600" height="922"><path d="M18.5,602.5 L13.5,606.5 L18.5,610.5 Z" fill="#505050"/><path d="M243,602.5 L248,606.5 L243,610.5 Z" fill="#505050"/><path d="M116.5,602 v8 M119.3,602 v8 M122.1,602 v8" stroke="#555" stroke-width="1"/><rect x="1576.4" y="429.3" width="18.2" height="308.7" rx="2" fill="url(#vthumb)" stroke="#9c9c9c" stroke-width="1"/><path d="M1581.5,580 h8 M1581.5,582.8 h8 M1581.5,585.6 h8" stroke="#555" stroke-width="1"/><path d="M1581.5,147.5 L1586,142 L1590.5,147.5 Z" fill="#333"/><path d="M1581.5,877.5 L1590.5,877.5 L1586,883 Z" fill="#333"/><defs><linearGradient id="vthumb" x1="0" y1="0" x2="1" y2="0"><stop offset="0" stop-color="#f2f2f2"/><stop offset="0.45" stop-color="#e8e8e8"/><stop offset="0.55" stop-color="#d6d6d8"/><stop offset="1" stop-color="#c8c8cc"/></linearGradient></defs><path d="M106.5,148.5 L113.5,148.5 L110,152.5 Z" fill="#111"/><circle cx="137" cy="149" r="5.5" fill="#fff" stroke="#333" stroke-width="1.4"/><path d="M141,153 L145.5,157.5" stroke="#555" stroke-width="2.2"/><path d="M134,149 h6 M137,146 v6" stroke="#111" stroke-width="1.4"/><circle cx="172" cy="149" r="5.5" fill="#fff" stroke="#333" stroke-width="1.4"/><path d="M176,153 L180.5,157.5" stroke="#555" stroke-width="2.2"/><path d="M169,149 h6" stroke="#111" stroke-width="1.4"/><path d="M235,697 L245,697 L240,702.5 Z" fill="#111"/><path d="M222,868 L214,875.5 L222,883 Z" fill="#8a8a8a"/><path d="M220,871 h3 v9 h-3z" fill="#7a7a7a"/><path d="M238,868 L246,875.5 L238,883 Z" fill="#2e6ef0"/><path d="M235,871.5 h4 v8 h-4z" fill="#3a7af4"/><rect x="1555.3" y="903" width="1.5" height="16" fill="#f0f0f0"/><rect x="1580.5" y="903" width="1.5" height="16" fill="#f0f0f0"/><rect x="1560" y="904" width="13" height="12.5" fill="#fafafa" stroke="#ccc" stroke-width="0.5"/><path d="M1562,906.3 h8.5 M1562,908.5 h5 M1562,911 h8.5 M1562,913.5 h8" stroke="#444" stroke-width="1.1"/></svg>
</body></html>
